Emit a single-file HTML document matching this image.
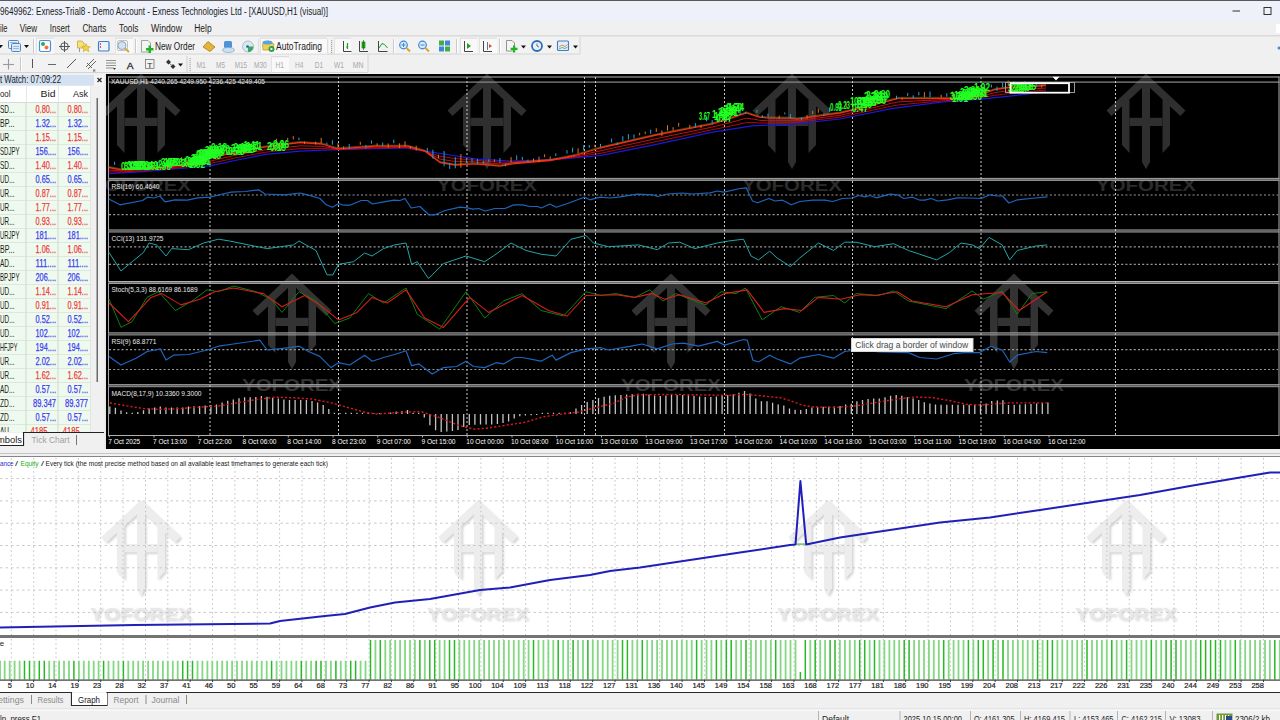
<!DOCTYPE html><html><head><meta charset="utf-8"><title>MT4</title><style>html,body{margin:0;padding:0;width:1280px;height:720px;overflow:hidden;background:#f0f0f0}svg{display:block;font-family:"Liberation Sans",sans-serif}</style></head><body><svg width="1280" height="720" viewBox="0 0 1280 720"><defs><g id="logo"><polygon points="0,0 39.5,37 34.5,42.5 0,10.7 -34.5,42.5 -39.5,37"/><polygon points="-4,5 4,5 4,88.5 0,95.7 -4,88.5"/><polygon points="-24,26 -16.5,26 -16.5,79.5 -24,71.5"/><polygon points="16.5,26 24,26 24,71.5 16.5,79.5"/><rect x="-16.5" y="44.2" width="33" height="8.2"/></g><filter id="blur1"><feGaussianBlur stdDeviation="0.6"/></filter><filter id="blur2"><feGaussianBlur stdDeviation="1.2"/></filter></defs><rect x="0" y="0" width="1280" height="21" fill="#eef1f9" /><rect x="0" y="0" width="1280" height="1" fill="#5a5a5a" /><text x="0" y="14.5" font-size="10" fill="#1b1b1b" textLength="328" lengthAdjust="spacingAndGlyphs" >9649962: Exness-Trial8 - Demo Account - Exness Technologies Ltd - [XAUUSD,H1 (visual)]</text><rect x="1232.5" y="10.5" width="7.5" height="1" fill="#333" /><rect x="1264" y="7.5" width="7" height="7" fill="none" stroke="#333" stroke-width="1"/><rect x="0" y="21" width="1280" height="15" fill="#f0f0f0" /><text x="0" y="31.5" font-size="10" fill="#1b1b1b" textLength="7.5" lengthAdjust="spacingAndGlyphs" >ile</text><text x="19.7" y="31.5" font-size="10" fill="#1b1b1b" textLength="17.4" lengthAdjust="spacingAndGlyphs" >View</text><text x="49.7" y="31.5" font-size="10" fill="#1b1b1b" textLength="20.1" lengthAdjust="spacingAndGlyphs" >Insert</text><text x="82.5" y="31.5" font-size="10" fill="#1b1b1b" textLength="23.9" lengthAdjust="spacingAndGlyphs" >Charts</text><text x="119.1" y="31.5" font-size="10" fill="#1b1b1b" textLength="19.4" lengthAdjust="spacingAndGlyphs" >Tools</text><text x="151" y="31.5" font-size="10" fill="#1b1b1b" textLength="31" lengthAdjust="spacingAndGlyphs" >Window</text><text x="194.2" y="31.5" font-size="10" fill="#1b1b1b" textLength="17.4" lengthAdjust="spacingAndGlyphs" >Help</text><rect x="1276" y="24" width="4" height="9" fill="#fff" /><rect x="0" y="35.2" width="1280" height="1.6" fill="#d6d6d6" /><rect x="0" y="36.5" width="1280" height="37.5" fill="#f0f0f0" /><rect x="0" y="37" width="580" height="17" fill="#f2f2f2" /><rect x="0" y="53.5" width="580" height="1" fill="#d4d4d4" /><rect x="579.5" y="37" width="1" height="17" fill="#d4d4d4" /><rect x="0" y="55" width="368" height="17.5" fill="#f2f2f2" /><rect x="0" y="72" width="368" height="1" fill="#d4d4d4" /><rect x="367.5" y="55" width="1" height="17.5" fill="#d4d4d4" /><polygon points="-2,45 3,45 0.5,48" fill="#111"/><rect x="8.5" y="40.5" width="10" height="8" rx="1" fill="#eaf2fb" stroke="#4f86c6"/><rect x="11.5" y="43.5" width="9" height="8" rx="1" fill="#dce9f7" stroke="#4f86c6"/><rect x="10" y="42" width="7" height="1" fill="#9bb7da" /><rect x="13" y="46" width="6" height="1" fill="#9bb7da" /><rect x="13" y="48" width="6" height="1" fill="#9bb7da" /><polygon points="24,45 29,45 26.5,48" fill="#111"/><rect x="33" y="39" width="1" height="14" fill="#c9c9c9" /><rect x="34" y="39" width="1" height="14" fill="#ffffff" /><rect x="36" y="37.5" width="18" height="16.0" fill="#f9f9f9" /><rect x="36" y="37.5" width="18" height="1.2" fill="#dcdcdc" /><rect x="36" y="37.5" width="1" height="16.0" fill="#e2e2e2" /><rect x="39.5" y="40.5" width="11" height="11" rx="1.5" fill="#fdfdfd" stroke="#4a8fda" stroke-width="1.2"/><circle cx="43" cy="44" r="2" fill="#2fa84f"/><circle cx="46.5" cy="47.5" r="2" fill="#f07040"/><g stroke="#555" fill="none" stroke-width="1"><circle cx="64.5" cy="46.5" r="3.8"/><line x1="64.5" y1="41" x2="64.5" y2="52"/><line x1="59" y1="46.5" x2="70" y2="46.5"/></g><polygon points="77.5,41 82,41 84,43 84,48 77.5,48" fill="#f6e27a" stroke="#c9a73a" stroke-width="0.8"/><polygon points="86,43.5 87.3,46.5 90.3,46.7 88,48.6 88.8,51.6 86,50 83.2,51.6 84,48.6 81.7,46.7 84.7,46.5" fill="#f5d33b" stroke="#c9a12a" stroke-width="0.6"/><rect x="79" y="48" width="1" height="4" fill="#999" /><rect x="98.5" y="41.5" width="10.5" height="9.5" rx="1" fill="#eef3fb" stroke="#3d7cc9" stroke-width="1.2"/><rect x="100" y="43" width="1" height="2" fill="#e05050" /><rect x="100" y="46" width="1" height="2" fill="#e05050" /><rect x="115" y="37.5" width="18" height="16.0" fill="#f9f9f9" /><rect x="115" y="37.5" width="18" height="1.2" fill="#dcdcdc" /><rect x="115" y="37.5" width="1" height="16.0" fill="#e2e2e2" /><circle cx="122" cy="45.5" r="4" fill="#cfe3f5" stroke="#8aa6c2"/><line x1="125" y1="48.5" x2="129" y2="52" stroke="#d9a520" stroke-width="1.8"/><rect x="117.5" y="40.5" width="10" height="10" rx="1.5" fill="none" stroke="#b9b3a6" stroke-width="0.8"/><rect x="135" y="39" width="1" height="14" fill="#c9c9c9" /><rect x="136" y="39" width="1" height="14" fill="#ffffff" /><polygon points="141.5,40.5 148,40.5 150.5,43 150.5,52 141.5,52" fill="#f4f4f4" stroke="#9a9a9a" stroke-width="0.9"/><path d="M148.5,45.5 h2.5 v2.5 h2.5 v2.5 h-2.5 v2.5 h-2.5 v-2.5 h-2.5 v-2.5 h2.5 z" fill="#22b322"/><text x="155" y="49.5" font-size="10" fill="#1b1b1b" textLength="40" lengthAdjust="spacingAndGlyphs" >New Order</text><polygon points="203,47 208,41.5 215,47 210,51.5" fill="#e2b43a" stroke="#a87b12" stroke-width="0.8"/><rect x="224" y="41" width="8" height="7" rx="1.5" fill="#4c93d8"/><ellipse cx="228.5" cy="50" rx="6" ry="2.5" fill="#cfe0f0" stroke="#7fa6cc" stroke-width="0.7"/><circle cx="248" cy="46.5" r="5.5" fill="#d9e8ee" stroke="#9ab4c0" stroke-width="0.8"/><path d="M248,46.5 L248,52 A5.5,5.5 0 0 0 253.5,46.5 Z" fill="#3aa866"/><circle cx="247.5" cy="46.5" r="1.3" fill="#2060a0"/><rect x="258.5" y="39" width="1" height="14" fill="#c9c9c9" /><rect x="259.5" y="39" width="1" height="14" fill="#ffffff" /><rect x="260" y="37.5" width="67" height="16.0" fill="#f9f9f9" /><rect x="260" y="37.5" width="67" height="1.2" fill="#dcdcdc" /><rect x="260" y="37.5" width="1" height="16.0" fill="#e2e2e2" /><polygon points="262.5,44 268,41 274,44 273,50 263,50" fill="#f1cf56" stroke="#b99325" stroke-width="0.7"/><ellipse cx="267.5" cy="42.5" rx="5" ry="2" fill="#5ba3dc"/><circle cx="271.5" cy="49" r="3" fill="#27a33b"/><polygon points="270.5,47.5 273.2,49 270.5,50.5" fill="#fff"/><text x="276" y="49.5" font-size="10" fill="#1b1b1b" textLength="46" lengthAdjust="spacingAndGlyphs" >AutoTrading</text><rect x="327.5" y="39" width="1" height="14" fill="#c9c9c9" /><rect x="328.5" y="39" width="1" height="14" fill="#ffffff" /><rect x="331" y="40" width="1.2" height="1.2" fill="#a8a8a8" /><rect x="331" y="42" width="1.2" height="1.2" fill="#a8a8a8" /><rect x="331" y="44" width="1.2" height="1.2" fill="#a8a8a8" /><rect x="331" y="46" width="1.2" height="1.2" fill="#a8a8a8" /><rect x="331" y="48" width="1.2" height="1.2" fill="#a8a8a8" /><rect x="331" y="50" width="1.2" height="1.2" fill="#a8a8a8" /><rect x="331" y="52" width="1.2" height="1.2" fill="#a8a8a8" /><rect x="334" y="37.5" width="17" height="16.0" fill="#f9f9f9" /><rect x="334" y="37.5" width="17" height="1.2" fill="#dcdcdc" /><rect x="334" y="37.5" width="1" height="16.0" fill="#e2e2e2" /><g fill="none" stroke="#444" stroke-width="1"><path d="M343.5,41 V51.5 H351.5"/></g><path d="M347.5,43 v6 M346,47 h1.5" stroke="#19a619" stroke-width="1.2" fill="none"/><g fill="none" stroke="#444" stroke-width="1"><path d="M359.5,41 V51.5 H368"/></g><rect x="362" y="42" width="3" height="6" fill="#1fc01f" stroke="#0c6b0c" stroke-width="0.6"/><line x1="363.5" y1="40" x2="363.5" y2="50" stroke="#0c6b0c" stroke-width="0.7"/><g fill="none" stroke="#444" stroke-width="1"><path d="M378.5,41 V51.5 H387.5"/></g><path d="M379,48 L382,43.5 L384.5,44.5 L387.5,48" fill="none" stroke="#1c9c1c" stroke-width="1"/><rect x="393" y="39" width="1" height="14" fill="#c9c9c9" /><rect x="394" y="39" width="1" height="14" fill="#ffffff" /><circle cx="403.5" cy="45" r="3.8" fill="#d7eafb" stroke="#3d86d6" stroke-width="1.2"/><path d="M401.5,45 h4 M403.5,43 v4" stroke="#3d86d6" stroke-width="1"/><line x1="406.5" y1="48" x2="410" y2="51.5" stroke="#d9a520" stroke-width="1.8"/><circle cx="422.5" cy="45" r="3.8" fill="#d7eafb" stroke="#3d86d6" stroke-width="1.2"/><path d="M420.5,45 h4" stroke="#3d86d6" stroke-width="1"/><line x1="425.5" y1="48" x2="429" y2="51.5" stroke="#d9a520" stroke-width="1.8"/><rect x="439" y="40.5" width="5" height="5" fill="#3fae49"/><rect x="445" y="40.5" width="5" height="5" fill="#3f86d9"/><rect x="439" y="46.5" width="5" height="5" fill="#3f86d9"/><rect x="445" y="46.5" width="5" height="5" fill="#3fae49"/><rect x="456" y="39" width="1" height="14" fill="#c9c9c9" /><rect x="457" y="39" width="1" height="14" fill="#ffffff" /><rect x="460" y="37.5" width="17" height="16.0" fill="#f9f9f9" /><rect x="460" y="37.5" width="17" height="1.2" fill="#dcdcdc" /><rect x="460" y="37.5" width="1" height="16.0" fill="#e2e2e2" /><rect x="479" y="37.5" width="18" height="16.0" fill="#f9f9f9" /><rect x="479" y="37.5" width="18" height="1.2" fill="#dcdcdc" /><rect x="479" y="37.5" width="1" height="16.0" fill="#e2e2e2" /><g fill="none" stroke="#444" stroke-width="1"><path d="M464.5,41 V51.5 H473"/></g><polygon points="467,43 471,46 467,49" fill="#1fa01f"/><g fill="none" stroke="#444" stroke-width="1"><path d="M483.5,41 V51.5 H492"/></g><line x1="487.5" y1="42" x2="487.5" y2="50" stroke="#4a7ab5"/><polygon points="489,44 492,46 489,48" fill="#d84a2a"/><rect x="499" y="39" width="1" height="14" fill="#c9c9c9" /><rect x="500" y="39" width="1" height="14" fill="#ffffff" /><polygon points="506.5,40.5 512,40.5 514.5,43 514.5,51 506.5,51" fill="#f4f4f4" stroke="#8a8a8a" stroke-width="0.9"/><path d="M513,45.5 h2.2 v2.3 h2.3 v2.3 h-2.3 v2.3 h-2.2 v-2.3 h-2.3 v-2.3 h2.3 z" fill="#22b322"/><polygon points="521,45.5 526,45.5 523.5,48.5" fill="#111"/><circle cx="537" cy="46" r="5" fill="#eaf3fc" stroke="#2c6fc0" stroke-width="1.8"/><path d="M537,43.5 V46 L539,47" stroke="#333" stroke-width="0.7" fill="none"/><polygon points="547,45.5 552,45.5 549.5,48.5" fill="#111"/><rect x="557.5" y="41" width="11" height="9.5" rx="1" fill="#e4eef8" stroke="#3d7cc9" stroke-width="1.1"/><path d="M559,47 L562,45 L565,46.5 L567.5,44.5" stroke="#e06a3a" stroke-width="0.8" fill="none"/><path d="M559,49 L562,47.5 L565,48.5 L567.5,47" stroke="#3aaa5a" stroke-width="0.8" fill="none"/><polygon points="573,45.5 578,45.5 575.5,48.5" fill="#111"/><circle cx="1279" cy="48" r="1.5" fill="#4a86d0"/><g stroke="#9a9a9a" stroke-width="1.1"><line x1="8.5" y1="59" x2="8.5" y2="69.5"/><line x1="3" y1="64.5" x2="14" y2="64.5"/></g><rect x="20" y="57" width="1" height="14" fill="#c9c9c9" /><rect x="21" y="57" width="1" height="14" fill="#ffffff" /><rect x="32" y="59" width="1" height="9" fill="#555" /><rect x="48" y="64" width="8" height="1" fill="#666" /><line x1="67" y1="68" x2="76" y2="59" stroke="#555" stroke-width="1" /><g stroke="#555" stroke-width="0.9"><line x1="86" y1="67" x2="94" y2="59"/><line x1="88" y1="69" x2="96" y2="61"/><line x1="87" y1="63" x2="92" y2="68"/></g><text x="93" y="72" font-size="4" fill="#333">E</text><g stroke="#777" stroke-width="0.8"><line x1="106" y1="60.5" x2="116" y2="60.5"/><line x1="106" y1="63" x2="116" y2="63"/><line x1="106" y1="65.5" x2="116" y2="65.5"/><line x1="106" y1="68" x2="114" y2="68"/></g><polygon points="113,68 116,68 114.5,70" fill="#444"/><text x="126.8" y="68.5" font-size="9.5" fill="#2a2a2a" textLength="6.8" lengthAdjust="spacingAndGlyphs" stroke="#2a2a2a" stroke-width="0.3">A</text><rect x="145.5" y="59.5" width="8.5" height="9" fill="none" stroke="#777" stroke-width="0.8"/><text x="147" y="67.5" font-size="8" fill="#333" textLength="5.5" lengthAdjust="spacingAndGlyphs" >T</text><path d="M168.5,59.5 L171,62 L168.5,64.5 L166,62 Z M173,64 L175.5,66.5 L173,69 L170.5,66.5 Z" fill="#333"/><line x1="169" y1="63" x2="172.5" y2="66" stroke="#555" stroke-width="0.8"/><polygon points="178,63.5 183,63.5 180.5,66.5" fill="#111"/><rect x="186.5" y="56" width="1" height="16" fill="#d0d0d0" /><rect x="189.5" y="58" width="1.2" height="1.2" fill="#b0b0b0" /><rect x="189.5" y="60" width="1.2" height="1.2" fill="#b0b0b0" /><rect x="189.5" y="62" width="1.2" height="1.2" fill="#b0b0b0" /><rect x="189.5" y="64" width="1.2" height="1.2" fill="#b0b0b0" /><rect x="189.5" y="66" width="1.2" height="1.2" fill="#b0b0b0" /><rect x="189.5" y="68" width="1.2" height="1.2" fill="#b0b0b0" /><rect x="189.5" y="70" width="1.2" height="1.2" fill="#b0b0b0" /><rect x="271" y="56" width="18" height="16" fill="#f9f9f9" /><rect x="271" y="56" width="18" height="1.2" fill="#dcdcdc" /><rect x="271" y="56" width="1" height="16" fill="#e2e2e2" /><text x="196.4" y="67.8" font-size="9" fill="#a9a9a9" textLength="9.4" lengthAdjust="spacingAndGlyphs" >M1</text><text x="216" y="67.8" font-size="9" fill="#a9a9a9" textLength="9" lengthAdjust="spacingAndGlyphs" >M5</text><text x="234.7" y="67.8" font-size="9" fill="#a9a9a9" textLength="12.3" lengthAdjust="spacingAndGlyphs" >M15</text><text x="254" y="67.8" font-size="9" fill="#a9a9a9" textLength="12.7" lengthAdjust="spacingAndGlyphs" >M30</text><text x="275.6" y="67.8" font-size="9" fill="#a9a9a9" textLength="8.4" lengthAdjust="spacingAndGlyphs" >H1</text><text x="295" y="67.8" font-size="9" fill="#a9a9a9" textLength="8.4" lengthAdjust="spacingAndGlyphs" >H4</text><text x="314.7" y="67.8" font-size="9" fill="#a9a9a9" textLength="8.3" lengthAdjust="spacingAndGlyphs" >D1</text><text x="334" y="67.8" font-size="9" fill="#a9a9a9" textLength="10" lengthAdjust="spacingAndGlyphs" >W1</text><text x="352.7" y="67.8" font-size="9" fill="#a9a9a9" textLength="10.9" lengthAdjust="spacingAndGlyphs" >MN</text><rect x="0" y="74" width="106" height="375" fill="#f0f0f0" /><rect x="0" y="75" width="94" height="10.5" fill="#d3e2f2" /><rect x="94" y="75" width="11" height="10.5" fill="#f4f4f4" /><text x="0" y="83.3" font-size="10" fill="#1b1b1b" textLength="61" lengthAdjust="spacingAndGlyphs" >t Watch: 07:09:22</text><path d="M97.5,78 L101.5,82 M101.5,78 L97.5,82" stroke="#222" stroke-width="1.2"/><rect x="0" y="86" width="91" height="346" fill="#effaef" /><rect x="0" y="86" width="91" height="16.5" fill="#ffffff" /><rect x="91" y="86" width="14" height="346" fill="#f0f0f0" /><rect x="0" y="102" width="91" height="1" fill="#d9d9d9" /><rect x="26" y="86" width="1" height="16.5" fill="#e6e6e6" /><rect x="58" y="86" width="1" height="16.5" fill="#e6e6e6" /><rect x="90" y="86" width="1" height="16.5" fill="#e6e6e6" /><text x="0" y="96.9" font-size="9.5" fill="#1b1b1b" textLength="10.5" lengthAdjust="spacingAndGlyphs" >ool</text><text x="40.5" y="96.9" font-size="9.5" fill="#1b1b1b" textLength="15" lengthAdjust="spacingAndGlyphs" >Bid</text><text x="73" y="96.9" font-size="9.5" fill="#1b1b1b" textLength="15" lengthAdjust="spacingAndGlyphs" >Ask</text><rect x="0" y="116" width="91" height="1" fill="#dfe6df" /><text x="0" y="113" font-size="10.3" fill="#1b1b1b" textLength="14.5" lengthAdjust="spacingAndGlyphs" >SD...</text><text x="35.5" y="113" font-size="10.3" fill="#f03b3b" textLength="20.5" lengthAdjust="spacingAndGlyphs" stroke="#f03b3b" stroke-width="0.25">0.80...</text><text x="67.5" y="113" font-size="10.3" fill="#f03b3b" textLength="20.5" lengthAdjust="spacingAndGlyphs" stroke="#f03b3b" stroke-width="0.25">0.80...</text><rect x="0" y="130" width="91" height="1" fill="#dfe6df" /><text x="0" y="127" font-size="10.3" fill="#1b1b1b" textLength="14.5" lengthAdjust="spacingAndGlyphs" >BP...</text><text x="35.5" y="127" font-size="10.3" fill="#3b3bf0" textLength="20.5" lengthAdjust="spacingAndGlyphs" stroke="#3b3bf0" stroke-width="0.25">1.32...</text><text x="67.5" y="127" font-size="10.3" fill="#3b3bf0" textLength="20.5" lengthAdjust="spacingAndGlyphs" stroke="#3b3bf0" stroke-width="0.25">1.32...</text><rect x="0" y="144" width="91" height="1" fill="#dfe6df" /><text x="0" y="141" font-size="10.3" fill="#1b1b1b" textLength="14.5" lengthAdjust="spacingAndGlyphs" >UR...</text><text x="35.5" y="141" font-size="10.3" fill="#f03b3b" textLength="20.5" lengthAdjust="spacingAndGlyphs" stroke="#f03b3b" stroke-width="0.25">1.15...</text><text x="67.5" y="141" font-size="10.3" fill="#f03b3b" textLength="20.5" lengthAdjust="spacingAndGlyphs" stroke="#f03b3b" stroke-width="0.25">1.15...</text><rect x="0" y="158" width="91" height="1" fill="#dfe6df" /><text x="0" y="155" font-size="10.3" fill="#1b1b1b" textLength="19.5" lengthAdjust="spacingAndGlyphs" >SDJPY</text><text x="35.5" y="155" font-size="10.3" fill="#3b3bf0" textLength="20.5" lengthAdjust="spacingAndGlyphs" stroke="#3b3bf0" stroke-width="0.25">156....</text><text x="67.5" y="155" font-size="10.3" fill="#3b3bf0" textLength="20.5" lengthAdjust="spacingAndGlyphs" stroke="#3b3bf0" stroke-width="0.25">156....</text><rect x="0" y="172" width="91" height="1" fill="#dfe6df" /><text x="0" y="169" font-size="10.3" fill="#1b1b1b" textLength="14.5" lengthAdjust="spacingAndGlyphs" >SD...</text><text x="35.5" y="169" font-size="10.3" fill="#f03b3b" textLength="20.5" lengthAdjust="spacingAndGlyphs" stroke="#f03b3b" stroke-width="0.25">1.40...</text><text x="67.5" y="169" font-size="10.3" fill="#f03b3b" textLength="20.5" lengthAdjust="spacingAndGlyphs" stroke="#f03b3b" stroke-width="0.25">1.40...</text><rect x="0" y="186" width="91" height="1" fill="#dfe6df" /><text x="0" y="183" font-size="10.3" fill="#1b1b1b" textLength="14.5" lengthAdjust="spacingAndGlyphs" >UD...</text><text x="35.5" y="183" font-size="10.3" fill="#3b3bf0" textLength="20.5" lengthAdjust="spacingAndGlyphs" stroke="#3b3bf0" stroke-width="0.25">0.65...</text><text x="67.5" y="183" font-size="10.3" fill="#3b3bf0" textLength="20.5" lengthAdjust="spacingAndGlyphs" stroke="#3b3bf0" stroke-width="0.25">0.65...</text><rect x="0" y="200" width="91" height="1" fill="#dfe6df" /><text x="0" y="197" font-size="10.3" fill="#1b1b1b" textLength="14.5" lengthAdjust="spacingAndGlyphs" >UR...</text><text x="35.5" y="197" font-size="10.3" fill="#f03b3b" textLength="20.5" lengthAdjust="spacingAndGlyphs" stroke="#f03b3b" stroke-width="0.25">0.87...</text><text x="67.5" y="197" font-size="10.3" fill="#f03b3b" textLength="20.5" lengthAdjust="spacingAndGlyphs" stroke="#f03b3b" stroke-width="0.25">0.87...</text><rect x="0" y="214" width="91" height="1" fill="#dfe6df" /><text x="0" y="211" font-size="10.3" fill="#1b1b1b" textLength="14.5" lengthAdjust="spacingAndGlyphs" >UR...</text><text x="35.5" y="211" font-size="10.3" fill="#f03b3b" textLength="20.5" lengthAdjust="spacingAndGlyphs" stroke="#f03b3b" stroke-width="0.25">1.77...</text><text x="67.5" y="211" font-size="10.3" fill="#f03b3b" textLength="20.5" lengthAdjust="spacingAndGlyphs" stroke="#f03b3b" stroke-width="0.25">1.77...</text><rect x="0" y="228" width="91" height="1" fill="#dfe6df" /><text x="0" y="225" font-size="10.3" fill="#1b1b1b" textLength="14.5" lengthAdjust="spacingAndGlyphs" >UR...</text><text x="35.5" y="225" font-size="10.3" fill="#f03b3b" textLength="20.5" lengthAdjust="spacingAndGlyphs" stroke="#f03b3b" stroke-width="0.25">0.93...</text><text x="67.5" y="225" font-size="10.3" fill="#f03b3b" textLength="20.5" lengthAdjust="spacingAndGlyphs" stroke="#f03b3b" stroke-width="0.25">0.93...</text><rect x="0" y="242" width="91" height="1" fill="#dfe6df" /><text x="0" y="239" font-size="10.3" fill="#1b1b1b" textLength="19.5" lengthAdjust="spacingAndGlyphs" >URJPY</text><text x="35.5" y="239" font-size="10.3" fill="#3b3bf0" textLength="20.5" lengthAdjust="spacingAndGlyphs" stroke="#3b3bf0" stroke-width="0.25">181....</text><text x="67.5" y="239" font-size="10.3" fill="#3b3bf0" textLength="20.5" lengthAdjust="spacingAndGlyphs" stroke="#3b3bf0" stroke-width="0.25">181....</text><rect x="0" y="256" width="91" height="1" fill="#dfe6df" /><text x="0" y="253" font-size="10.3" fill="#1b1b1b" textLength="14.5" lengthAdjust="spacingAndGlyphs" >BP...</text><text x="35.5" y="253" font-size="10.3" fill="#f03b3b" textLength="20.5" lengthAdjust="spacingAndGlyphs" stroke="#f03b3b" stroke-width="0.25">1.06...</text><text x="67.5" y="253" font-size="10.3" fill="#f03b3b" textLength="20.5" lengthAdjust="spacingAndGlyphs" stroke="#f03b3b" stroke-width="0.25">1.06...</text><rect x="0" y="270" width="91" height="1" fill="#dfe6df" /><text x="0" y="267" font-size="10.3" fill="#1b1b1b" textLength="14.5" lengthAdjust="spacingAndGlyphs" >AD...</text><text x="35.5" y="267" font-size="10.3" fill="#3b3bf0" textLength="20.5" lengthAdjust="spacingAndGlyphs" stroke="#3b3bf0" stroke-width="0.25">111....</text><text x="67.5" y="267" font-size="10.3" fill="#3b3bf0" textLength="20.5" lengthAdjust="spacingAndGlyphs" stroke="#3b3bf0" stroke-width="0.25">111....</text><rect x="0" y="284" width="91" height="1" fill="#dfe6df" /><text x="0" y="281" font-size="10.3" fill="#1b1b1b" textLength="19.5" lengthAdjust="spacingAndGlyphs" >BPJPY</text><text x="35.5" y="281" font-size="10.3" fill="#3b3bf0" textLength="20.5" lengthAdjust="spacingAndGlyphs" stroke="#3b3bf0" stroke-width="0.25">206....</text><text x="67.5" y="281" font-size="10.3" fill="#3b3bf0" textLength="20.5" lengthAdjust="spacingAndGlyphs" stroke="#3b3bf0" stroke-width="0.25">206....</text><rect x="0" y="298" width="91" height="1" fill="#dfe6df" /><text x="0" y="295" font-size="10.3" fill="#1b1b1b" textLength="14.5" lengthAdjust="spacingAndGlyphs" >UD...</text><text x="35.5" y="295" font-size="10.3" fill="#f03b3b" textLength="20.5" lengthAdjust="spacingAndGlyphs" stroke="#f03b3b" stroke-width="0.25">1.14...</text><text x="67.5" y="295" font-size="10.3" fill="#f03b3b" textLength="20.5" lengthAdjust="spacingAndGlyphs" stroke="#f03b3b" stroke-width="0.25">1.14...</text><rect x="0" y="312" width="91" height="1" fill="#dfe6df" /><text x="0" y="309" font-size="10.3" fill="#1b1b1b" textLength="14.5" lengthAdjust="spacingAndGlyphs" >UD...</text><text x="35.5" y="309" font-size="10.3" fill="#f03b3b" textLength="20.5" lengthAdjust="spacingAndGlyphs" stroke="#f03b3b" stroke-width="0.25">0.91...</text><text x="67.5" y="309" font-size="10.3" fill="#f03b3b" textLength="20.5" lengthAdjust="spacingAndGlyphs" stroke="#f03b3b" stroke-width="0.25">0.91...</text><rect x="0" y="326" width="91" height="1" fill="#dfe6df" /><text x="0" y="323" font-size="10.3" fill="#1b1b1b" textLength="14.5" lengthAdjust="spacingAndGlyphs" >UD...</text><text x="35.5" y="323" font-size="10.3" fill="#3b3bf0" textLength="20.5" lengthAdjust="spacingAndGlyphs" stroke="#3b3bf0" stroke-width="0.25">0.52...</text><text x="67.5" y="323" font-size="10.3" fill="#3b3bf0" textLength="20.5" lengthAdjust="spacingAndGlyphs" stroke="#3b3bf0" stroke-width="0.25">0.52...</text><rect x="0" y="340" width="91" height="1" fill="#dfe6df" /><text x="0" y="337" font-size="10.3" fill="#1b1b1b" textLength="14.5" lengthAdjust="spacingAndGlyphs" >UD...</text><text x="35.5" y="337" font-size="10.3" fill="#3b3bf0" textLength="20.5" lengthAdjust="spacingAndGlyphs" stroke="#3b3bf0" stroke-width="0.25">102....</text><text x="67.5" y="337" font-size="10.3" fill="#3b3bf0" textLength="20.5" lengthAdjust="spacingAndGlyphs" stroke="#3b3bf0" stroke-width="0.25">102....</text><rect x="0" y="354" width="91" height="1" fill="#dfe6df" /><text x="0" y="351" font-size="10.3" fill="#1b1b1b" textLength="17.5" lengthAdjust="spacingAndGlyphs" >HFJPY</text><text x="35.5" y="351" font-size="10.3" fill="#3b3bf0" textLength="20.5" lengthAdjust="spacingAndGlyphs" stroke="#3b3bf0" stroke-width="0.25">194....</text><text x="67.5" y="351" font-size="10.3" fill="#3b3bf0" textLength="20.5" lengthAdjust="spacingAndGlyphs" stroke="#3b3bf0" stroke-width="0.25">194....</text><rect x="0" y="368" width="91" height="1" fill="#dfe6df" /><text x="0" y="365" font-size="10.3" fill="#1b1b1b" textLength="14.5" lengthAdjust="spacingAndGlyphs" >UR...</text><text x="35.5" y="365" font-size="10.3" fill="#3b3bf0" textLength="20.5" lengthAdjust="spacingAndGlyphs" stroke="#3b3bf0" stroke-width="0.25">2.02...</text><text x="67.5" y="365" font-size="10.3" fill="#3b3bf0" textLength="20.5" lengthAdjust="spacingAndGlyphs" stroke="#3b3bf0" stroke-width="0.25">2.02...</text><rect x="0" y="382" width="91" height="1" fill="#dfe6df" /><text x="0" y="379" font-size="10.3" fill="#1b1b1b" textLength="14.5" lengthAdjust="spacingAndGlyphs" >UR...</text><text x="35.5" y="379" font-size="10.3" fill="#f03b3b" textLength="20.5" lengthAdjust="spacingAndGlyphs" stroke="#f03b3b" stroke-width="0.25">1.62...</text><text x="67.5" y="379" font-size="10.3" fill="#f03b3b" textLength="20.5" lengthAdjust="spacingAndGlyphs" stroke="#f03b3b" stroke-width="0.25">1.62...</text><rect x="0" y="396" width="91" height="1" fill="#dfe6df" /><text x="0" y="393" font-size="10.3" fill="#1b1b1b" textLength="14.5" lengthAdjust="spacingAndGlyphs" >AD...</text><text x="35.5" y="393" font-size="10.3" fill="#3b3bf0" textLength="20.5" lengthAdjust="spacingAndGlyphs" stroke="#3b3bf0" stroke-width="0.25">0.57...</text><text x="67.5" y="393" font-size="10.3" fill="#3b3bf0" textLength="20.5" lengthAdjust="spacingAndGlyphs" stroke="#3b3bf0" stroke-width="0.25">0.57...</text><rect x="0" y="410" width="91" height="1" fill="#dfe6df" /><text x="0" y="407" font-size="10.3" fill="#1b1b1b" textLength="14.5" lengthAdjust="spacingAndGlyphs" >ZD...</text><text x="33" y="407" font-size="10.3" fill="#3b3bf0" textLength="23" lengthAdjust="spacingAndGlyphs" stroke="#3b3bf0" stroke-width="0.25">89.347</text><text x="65" y="407" font-size="10.3" fill="#3b3bf0" textLength="23" lengthAdjust="spacingAndGlyphs" stroke="#3b3bf0" stroke-width="0.25">89.377</text><rect x="0" y="424" width="91" height="1" fill="#dfe6df" /><text x="0" y="421" font-size="10.3" fill="#1b1b1b" textLength="14.5" lengthAdjust="spacingAndGlyphs" >ZD...</text><text x="35.5" y="421" font-size="10.3" fill="#3b3bf0" textLength="20.5" lengthAdjust="spacingAndGlyphs" stroke="#3b3bf0" stroke-width="0.25">0.57...</text><text x="67.5" y="421" font-size="10.3" fill="#3b3bf0" textLength="20.5" lengthAdjust="spacingAndGlyphs" stroke="#3b3bf0" stroke-width="0.25">0.57...</text><rect x="0" y="438" width="91" height="1" fill="#dfe6df" /><text x="0" y="435" font-size="10.3" fill="#1b1b1b" textLength="9" lengthAdjust="spacingAndGlyphs" >AU</text><text x="30.6" y="435" font-size="10.3" fill="#f03b3b" textLength="17" lengthAdjust="spacingAndGlyphs" stroke="#f03b3b" stroke-width="0.25">4185</text><text x="62.7" y="435" font-size="10.3" fill="#f03b3b" textLength="17" lengthAdjust="spacingAndGlyphs" stroke="#f03b3b" stroke-width="0.25">4185</text><rect x="25.5" y="103" width="1" height="329" fill="#cfd6cf" /><rect x="57.5" y="103" width="1" height="329" fill="#cfd6cf" /><rect x="90" y="103" width="1" height="329" fill="#dfe6df" /><rect x="96.5" y="98" width="1.5" height="284" fill="#6a6a6a" /><rect x="0" y="432" width="105" height="17" fill="#f0f0f0" /><path d="M0,445.5 H23.5 V432.5 H104" fill="none" stroke="#222" stroke-width="1.2"/><rect x="0" y="433" width="23" height="12" fill="#ffffff" /><text x="-3" y="442.5" font-size="9.5" fill="#1b1b1b" textLength="25" lengthAdjust="spacingAndGlyphs" >mbols</text><text x="31.5" y="442.5" font-size="9.5" fill="#a0a0a0" textLength="38" lengthAdjust="spacingAndGlyphs" >Tick Chart</text><rect x="76" y="435" width="1" height="10" fill="#777" /><rect x="104.5" y="74" width="1.5" height="375" fill="#e6e6e6" /><rect x="106" y="74" width="1174" height="375" fill="#000000" /><clipPath id="chartclip"><rect x="106" y="74" width="1174" height="375"/></clipPath><g clip-path="url(#chartclip)"><use href="#logo" x="141" y="73.6" fill="#2f2f2f" /><text x="91" y="190.9" font-size="17.3" font-weight="bold" fill="#2c2c2c" textLength="100" lengthAdjust="spacingAndGlyphs" >YOFOREX</text><use href="#logo" x="487" y="73.6" fill="#2f2f2f" /><text x="437" y="190.9" font-size="17.3" font-weight="bold" fill="#2c2c2c" textLength="100" lengthAdjust="spacingAndGlyphs" >YOFOREX</text><use href="#logo" x="792" y="73.6" fill="#2f2f2f" /><text x="742" y="190.9" font-size="17.3" font-weight="bold" fill="#2c2c2c" textLength="100" lengthAdjust="spacingAndGlyphs" >YOFOREX</text><use href="#logo" x="1146" y="73.6" fill="#2f2f2f" /><text x="1096" y="190.9" font-size="17.3" font-weight="bold" fill="#2c2c2c" textLength="100" lengthAdjust="spacingAndGlyphs" >YOFOREX</text><use href="#logo" x="292" y="273.6" fill="#333333" /><text x="242" y="390.90000000000003" font-size="17.3" font-weight="bold" fill="#333333" textLength="100" lengthAdjust="spacingAndGlyphs" >YOFOREX</text><use href="#logo" x="671" y="273.6" fill="#333333" /><text x="621" y="390.90000000000003" font-size="17.3" font-weight="bold" fill="#333333" textLength="100" lengthAdjust="spacingAndGlyphs" >YOFOREX</text><use href="#logo" x="1014" y="273.6" fill="#333333" /><text x="964" y="390.90000000000003" font-size="17.3" font-weight="bold" fill="#333333" textLength="100" lengthAdjust="spacingAndGlyphs" >YOFOREX</text></g><rect x="108" y="76.5" width="1171.5" height="1" fill="#b4b4b4" /><rect x="108" y="81.5" width="1171.5" height="1.2" fill="#8a8a8a" /><rect x="108" y="76.5" width="1" height="359" fill="#a8a8a8" /><rect x="1278.5" y="76.5" width="1" height="359" fill="#b4b4b4" /><rect x="108" y="177.9" width="1171.5" height="1" fill="#b0b0b0" /><rect x="108" y="178.9" width="1171.5" height="1" fill="#6e6e6e" /><rect x="108" y="179.9" width="1171.5" height="1" fill="#9c9c9c" /><rect x="108" y="229.5" width="1171.5" height="1" fill="#b0b0b0" /><rect x="108" y="230.5" width="1171.5" height="1" fill="#6e6e6e" /><rect x="108" y="231.5" width="1171.5" height="1" fill="#9c9c9c" /><rect x="108" y="281.0" width="1171.5" height="1" fill="#b0b0b0" /><rect x="108" y="282.0" width="1171.5" height="1" fill="#6e6e6e" /><rect x="108" y="283.0" width="1171.5" height="1" fill="#9c9c9c" /><rect x="108" y="332.4" width="1171.5" height="1" fill="#b0b0b0" /><rect x="108" y="333.4" width="1171.5" height="1" fill="#6e6e6e" /><rect x="108" y="334.4" width="1171.5" height="1" fill="#9c9c9c" /><rect x="108" y="384.2" width="1171.5" height="1" fill="#b0b0b0" /><rect x="108" y="385.2" width="1171.5" height="1" fill="#6e6e6e" /><rect x="108" y="386.2" width="1171.5" height="1" fill="#9c9c9c" /><rect x="108" y="435" width="1171.5" height="1" fill="#b0b0b0" /><line x1="210" y1="77" x2="210" y2="435" stroke="#c8c8c8" stroke-width="1" stroke-dasharray="2,2"/><line x1="338.5" y1="77" x2="338.5" y2="435" stroke="#c8c8c8" stroke-width="1" stroke-dasharray="2,2"/><line x1="467" y1="77" x2="467" y2="435" stroke="#c8c8c8" stroke-width="1" stroke-dasharray="2,2"/><line x1="584.5" y1="77" x2="584.5" y2="435" stroke="#c8c8c8" stroke-width="1" stroke-dasharray="2,2"/><line x1="595.5" y1="77" x2="595.5" y2="435" stroke="#c8c8c8" stroke-width="1" stroke-dasharray="2,2"/><line x1="724.5" y1="77" x2="724.5" y2="435" stroke="#c8c8c8" stroke-width="1" stroke-dasharray="2,2"/><line x1="852.5" y1="77" x2="852.5" y2="435" stroke="#c8c8c8" stroke-width="1" stroke-dasharray="2,2"/><line x1="981" y1="77" x2="981" y2="435" stroke="#c8c8c8" stroke-width="1" stroke-dasharray="2,2"/><line x1="1115.5" y1="77" x2="1115.5" y2="435" stroke="#c8c8c8" stroke-width="1" stroke-dasharray="2,2"/><line x1="109" y1="195" x2="1278" y2="195" stroke="#9a9a9a" stroke-width="1.2" stroke-dasharray="2,2.2"/><line x1="109" y1="214.7" x2="1278" y2="214.7" stroke="#9a9a9a" stroke-width="1.2" stroke-dasharray="2,2.2"/><line x1="109" y1="246.8" x2="1278" y2="246.8" stroke="#9a9a9a" stroke-width="1.2" stroke-dasharray="2,2.2"/><line x1="109" y1="264.4" x2="1278" y2="264.4" stroke="#9a9a9a" stroke-width="1.2" stroke-dasharray="2,2.2"/><line x1="109" y1="349.6" x2="1278" y2="349.6" stroke="#9a9a9a" stroke-width="1.2" stroke-dasharray="2,2.2"/><line x1="109" y1="369.5" x2="1278" y2="369.5" stroke="#9a9a9a" stroke-width="1.2" stroke-dasharray="2,2.2"/><rect x="108.75" y="435" width="1" height="2.5" fill="#b0b0b0" /><text x="108.25" y="443.8" font-size="8" fill="#ffffff" textLength="32" lengthAdjust="spacingAndGlyphs" >7 Oct 2025</text><rect x="153.5" y="435" width="1" height="2.5" fill="#b0b0b0" /><text x="153.0" y="443.8" font-size="8" fill="#ffffff" textLength="34" lengthAdjust="spacingAndGlyphs" >7 Oct 13:00</text><rect x="198.25" y="435" width="1" height="2.5" fill="#b0b0b0" /><text x="197.75" y="443.8" font-size="8" fill="#ffffff" textLength="34" lengthAdjust="spacingAndGlyphs" >7 Oct 22:00</text><rect x="243.0" y="435" width="1" height="2.5" fill="#b0b0b0" /><text x="242.5" y="443.8" font-size="8" fill="#ffffff" textLength="34" lengthAdjust="spacingAndGlyphs" >8 Oct 06:00</text><rect x="287.75" y="435" width="1" height="2.5" fill="#b0b0b0" /><text x="287.25" y="443.8" font-size="8" fill="#ffffff" textLength="34" lengthAdjust="spacingAndGlyphs" >8 Oct 14:00</text><rect x="332.5" y="435" width="1" height="2.5" fill="#b0b0b0" /><text x="332.0" y="443.8" font-size="8" fill="#ffffff" textLength="34" lengthAdjust="spacingAndGlyphs" >8 Oct 23:00</text><rect x="377.25" y="435" width="1" height="2.5" fill="#b0b0b0" /><text x="376.75" y="443.8" font-size="8" fill="#ffffff" textLength="34" lengthAdjust="spacingAndGlyphs" >9 Oct 07:00</text><rect x="422.0" y="435" width="1" height="2.5" fill="#b0b0b0" /><text x="421.5" y="443.8" font-size="8" fill="#ffffff" textLength="34" lengthAdjust="spacingAndGlyphs" >9 Oct 15:00</text><rect x="466.75" y="435" width="1" height="2.5" fill="#b0b0b0" /><text x="466.25" y="443.8" font-size="8" fill="#ffffff" textLength="37.5" lengthAdjust="spacingAndGlyphs" >10 Oct 00:00</text><rect x="511.5" y="435" width="1" height="2.5" fill="#b0b0b0" /><text x="511.0" y="443.8" font-size="8" fill="#ffffff" textLength="37.5" lengthAdjust="spacingAndGlyphs" >10 Oct 08:00</text><rect x="556.25" y="435" width="1" height="2.5" fill="#b0b0b0" /><text x="555.75" y="443.8" font-size="8" fill="#ffffff" textLength="37.5" lengthAdjust="spacingAndGlyphs" >10 Oct 16:00</text><rect x="601.0" y="435" width="1" height="2.5" fill="#b0b0b0" /><text x="600.5" y="443.8" font-size="8" fill="#ffffff" textLength="37.5" lengthAdjust="spacingAndGlyphs" >13 Oct 01:00</text><rect x="645.75" y="435" width="1" height="2.5" fill="#b0b0b0" /><text x="645.25" y="443.8" font-size="8" fill="#ffffff" textLength="37.5" lengthAdjust="spacingAndGlyphs" >13 Oct 09:00</text><rect x="690.5" y="435" width="1" height="2.5" fill="#b0b0b0" /><text x="690.0" y="443.8" font-size="8" fill="#ffffff" textLength="37.5" lengthAdjust="spacingAndGlyphs" >13 Oct 17:00</text><rect x="735.25" y="435" width="1" height="2.5" fill="#b0b0b0" /><text x="734.75" y="443.8" font-size="8" fill="#ffffff" textLength="37.5" lengthAdjust="spacingAndGlyphs" >14 Oct 02:00</text><rect x="780.0" y="435" width="1" height="2.5" fill="#b0b0b0" /><text x="779.5" y="443.8" font-size="8" fill="#ffffff" textLength="37.5" lengthAdjust="spacingAndGlyphs" >14 Oct 10:00</text><rect x="824.75" y="435" width="1" height="2.5" fill="#b0b0b0" /><text x="824.25" y="443.8" font-size="8" fill="#ffffff" textLength="37.5" lengthAdjust="spacingAndGlyphs" >14 Oct 18:00</text><rect x="869.5" y="435" width="1" height="2.5" fill="#b0b0b0" /><text x="869.0" y="443.8" font-size="8" fill="#ffffff" textLength="37.5" lengthAdjust="spacingAndGlyphs" >15 Oct 03:00</text><rect x="914.25" y="435" width="1" height="2.5" fill="#b0b0b0" /><text x="913.75" y="443.8" font-size="8" fill="#ffffff" textLength="37.5" lengthAdjust="spacingAndGlyphs" >15 Oct 11:00</text><rect x="959.0" y="435" width="1" height="2.5" fill="#b0b0b0" /><text x="958.5" y="443.8" font-size="8" fill="#ffffff" textLength="37.5" lengthAdjust="spacingAndGlyphs" >15 Oct 19:00</text><rect x="1003.75" y="435" width="1" height="2.5" fill="#b0b0b0" /><text x="1003.25" y="443.8" font-size="8" fill="#ffffff" textLength="37.5" lengthAdjust="spacingAndGlyphs" >16 Oct 04:00</text><rect x="1048.5" y="435" width="1" height="2.5" fill="#b0b0b0" /><text x="1048.0" y="443.8" font-size="8" fill="#ffffff" textLength="37.5" lengthAdjust="spacingAndGlyphs" >16 Oct 12:00</text><text x="111" y="84.2" font-size="8" fill="#e8e8e8" textLength="154" lengthAdjust="spacingAndGlyphs" >XAUUSD,H1  4240.265 4249.950 4236.425 4249.405</text><text x="111.5" y="189" font-size="8" fill="#e8e8e8" textLength="48" lengthAdjust="spacingAndGlyphs" >RSI(16) 66.4640</text><text x="111.5" y="240.5" font-size="8" fill="#e8e8e8" textLength="52" lengthAdjust="spacingAndGlyphs" >CCI(13) 131.9725</text><text x="111.5" y="292" font-size="8" fill="#e8e8e8" textLength="86" lengthAdjust="spacingAndGlyphs" >Stoch(5,3,3) 88.6169 86.1689</text><text x="111.5" y="344" font-size="8" fill="#e8e8e8" textLength="45" lengthAdjust="spacingAndGlyphs" >RSI(9) 68.8771</text><text x="111.5" y="395.5" font-size="8" fill="#e8e8e8" textLength="90" lengthAdjust="spacingAndGlyphs" >MACD(8,17,9) 10.3360 9.3000</text><g clip-path="url(#chartclip)"><polyline points="108.8,199.0 120.0,204.8 142.5,200.5 147.5,197.2 153.8,198.0 160.0,196.0 165.0,201.8 175.0,199.8 187.5,200.2 197.5,197.8 210.0,197.2 222.5,194.0 231.2,192.2 245.0,191.5 258.8,189.8 265.0,194.0 285.0,194.8 300.0,193.0 307.5,194.8 320.0,198.5 326.2,204.8 332.5,207.2 338.8,203.5 343.8,205.2 350.0,205.2 361.2,200.5 367.5,200.5 372.5,204.0 382.5,202.2 393.8,200.2 400.0,200.5 405.0,198.5 411.2,208.0 420.0,206.5 428.8,214.8 435.0,214.8 445.0,210.5 460.0,207.2 467.5,207.8 472.5,209.2 478.8,208.5 485.0,211.0 495.0,208.5 505.0,208.5 513.8,204.8 522.5,204.8 530.0,206.5 537.5,206.5 541.2,208.0 550.0,204.0 556.2,207.2 567.5,203.5 577.5,199.8 584.5,197.2 590.0,199.8 600.0,197.2 610.0,198.0 620.0,196.8 637.5,194.2 652.5,194.8 657.5,196.5 667.5,194.0 682.5,193.0 692.5,194.0 710.0,192.8 717.5,191.0 723.8,192.2 740.0,188.5 746.2,187.8 752.5,201.0 757.5,202.8 768.8,198.5 775.0,201.0 782.5,200.2 791.2,204.8 800.0,201.5 812.5,200.2 825.0,200.2 832.5,201.5 842.5,198.5 852.5,198.0 858.8,195.5 865.0,196.8 870.0,195.5 876.2,197.8 890.0,194.2 897.5,194.8 903.8,198.5 912.5,197.2 920.0,200.2 925.0,200.2 931.2,198.5 937.5,201.0 947.5,199.8 957.5,197.8 970.0,198.0 981.2,198.5 990.0,194.8 997.5,196.0 1002.5,196.0 1008.8,203.0 1017.5,199.8 1035.0,198.0 1047.5,196.8" fill="none" stroke="#1d66bf" stroke-width="1.2" stroke-linejoin="round" /><polyline points="109.0,252.4 121.0,271.0 132.2,261.7 143.5,252.4 149.0,243.0 156.6,244.9 166.0,256.0 171.6,248.6 188.5,249.7 203.5,243.0 218.5,239.2 229.7,241.0 248.5,244.9 267.2,248.6 293.5,244.9 299.0,241.0 316.0,250.5 327.0,274.9 332.8,274.9 338.5,264.4 353.5,261.7 364.7,253.0 372.0,256.0 383.5,248.6 394.7,244.9 406.0,243.0 411.6,264.4 417.2,261.7 428.5,278.6 443.5,263.6 466.0,256.0 484.7,261.7 496.0,254.2 511.0,243.0 526.0,250.5 541.0,254.2 556.0,256.0 571.0,239.2 586.0,235.5 593.5,243.0 608.5,246.7 638.5,244.9 657.2,249.7 668.5,243.0 679.7,242.2 694.7,248.6 717.2,243.0 728.5,241.0 743.5,239.2 751.0,256.0 758.5,259.9 769.7,251.2 777.2,258.0 790.4,266.6 799.7,258.0 818.5,243.0 833.5,250.5 844.7,242.2 856.0,242.2 874.7,246.7 893.5,243.7 908.5,250.5 919.7,254.2 936.6,259.9 949.7,252.4 961.0,243.0 972.2,244.9 979.7,248.6 989.0,237.4 1002.2,244.9 1009.7,259.9 1017.2,250.5 1036.0,246.0 1047.2,244.9" fill="none" stroke="#22a6a6" stroke-width="1.0" stroke-linejoin="round" /><polyline points="109.0,299.0 121.0,327.4 132.0,321.7 147.0,297.4 158.5,291.7 175.4,310.5 192.0,301.0 207.0,289.9 218.5,291.7 233.5,286.0 256.0,291.7 271.0,299.2 282.0,312.4 299.0,291.7 316.0,301.0 334.7,323.6 349.7,318.0 368.5,293.6 383.5,303.0 406.0,288.0 417.2,314.2 439.7,329.2 466.0,291.7 484.7,318.0 503.5,301.0 522.2,293.6 541.0,310.5 563.5,316.0 586.0,291.7 601.0,295.5 616.0,293.6 634.7,297.4 649.7,289.9 662.9,301.0 676.0,293.6 694.7,301.0 706.0,304.9 721.0,291.7 736.0,293.6 745.4,288.0 762.2,319.9 781.0,306.7 799.7,312.4 814.7,297.4 833.5,295.5 844.7,303.0 856.0,293.6 878.5,295.5 893.5,291.0 908.5,301.0 946.0,308.6 972.2,291.0 983.5,299.2 1002.2,291.0 1017.2,314.2 1032.2,293.6 1047.2,291.7" fill="none" stroke="#0c800c" stroke-width="1.0" stroke-linejoin="round" /><polyline points="109.0,303.0 128.5,321.7 151.0,297.4 162.0,293.6 181.0,304.9 199.7,299.2 214.7,291.7 233.5,288.0 263.5,293.6 282.0,306.7 304.7,295.5 319.7,304.9 338.5,319.9 357.0,312.4 372.0,297.4 387.2,303.0 406.0,289.9 424.7,318.0 443.5,327.4 469.7,297.4 488.5,312.4 522.2,295.5 548.5,310.5 567.2,316.0 586.0,295.5 616.0,294.7 634.7,297.4 651.6,293.6 664.7,299.2 679.7,294.7 706.0,303.0 724.7,293.6 747.2,289.9 764.1,312.4 784.7,308.6 801.6,310.5 818.5,297.4 841.0,299.2 859.7,294.7 874.7,295.5 897.2,291.7 912.2,301.0 946.0,306.7 972.2,294.7 1002.2,292.5 1019.1,310.5 1047.2,291.7" fill="none" stroke="#d81c1c" stroke-width="1.1" stroke-linejoin="round" /><polyline points="109.0,356.4 121.0,365.0 136.0,358.2 147.2,351.5 160.4,348.9 166.0,360.1 173.5,355.2 188.5,354.5 207.2,350.0 218.5,346.2 233.5,344.0 259.7,340.2 267.2,350.0 278.5,348.9 289.7,347.7 299.1,346.2 308.5,351.5 319.7,356.4 331.0,367.6 338.5,362.7 349.7,365.0 364.7,355.2 372.2,361.2 383.5,357.5 394.7,354.5 406.0,350.7 411.6,365.7 419.0,363.9 432.2,374.0 443.5,367.6 456.6,366.5 466.0,361.2 473.5,366.5 484.7,367.6 496.0,362.7 503.5,363.9 514.7,357.5 522.2,357.5 541.0,361.2 552.2,355.2 556.0,360.1 571.0,352.6 586.0,348.9 601.0,347.7 608.5,350.0 631.0,346.2 642.2,344.0 657.2,348.9 672.2,344.0 683.5,343.2 698.5,346.2 717.2,341.4 724.7,345.1 743.5,339.5 747.2,340.2 752.9,360.1 758.5,362.0 769.7,355.2 777.2,359.0 790.4,363.9 799.7,358.2 818.5,354.5 833.5,358.2 844.7,351.5 856.0,350.0 880.0,352.0 908.5,352.6 919.7,357.5 936.6,359.0 953.5,353.7 964.7,352.6 979.7,352.6 991.0,346.2 1002.2,350.0 1009.7,362.0 1017.2,355.2 1036.0,351.5 1047.2,352.6" fill="none" stroke="#1d66bf" stroke-width="1.2" stroke-linejoin="round" /><path d="M109.8,414 V406.6 M115.4,414 V407.7 M121.0,414 V410.4 M126.6,414 V412.2 M132.2,414 V412.7 M137.8,414 V412.1 M143.5,414 V410.2 M149.1,414 V408.5 M154.7,414 V407.5 M160.3,414 V406.6 M165.9,414 V407.5 M171.5,414 V407.5 M177.2,414 V407.5 M182.8,414 V407.4 M188.4,414 V406.6 M194.0,414 V406.3 M199.6,414 V405.9 M205.2,414 V405.5 M210.9,414 V405.1 M216.5,414 V404.5 M222.1,414 V402.6 M227.7,414 V400.7 M233.3,414 V399.5 M239.0,414 V398.3 M244.6,414 V397.2 M250.2,414 V397.2 M255.8,414 V397.1 M261.4,414 V396.0 M267.0,414 V396.7 M272.7,414 V397.9 M278.3,414 V398.6 M283.9,414 V399.6 M289.5,414 V400.0 M295.1,414 V400.0 M300.7,414 V400.0 M306.4,414 V400.1 M312.0,414 V401.0 M317.6,414 V402.4 M323.2,414 V405.0 M328.8,414 V408.9 M334.4,414 V412.7 M340.1,414 V413.1 M345.7,414 V412.8 M351.3,414 V412.8 M356.9,414 V412.8 M362.5,414 V412.8 M368.2,414 V412.8 M373.8,414 V413.2 M379.4,414 V413.1 M385.0,414 V413.0 M390.6,414 V412.6 M396.2,414 V411.5 M401.9,414 V411.1 M407.5,414 V410.1 M413.1,414 V412.8 M418.7,414 V412.8 M424.3,414 V417.5 M429.9,414 V425.3 M435.6,414 V430.3 M441.2,414 V431.9 M446.8,414 V431.5 M452.4,414 V431.0 M458.0,414 V429.9 M463.7,414 V427.0 M469.3,414 V425.1 M474.9,414 V424.7 M480.5,414 V424.4 M486.1,414 V424.4 M491.7,414 V424.4 M497.4,414 V424.1 M503.0,414 V423.1 M508.6,414 V421.4 M514.2,414 V418.6 M519.8,414 V416.3 M525.4,414 V415.4 M531.1,414 V415.3 M536.7,414 V415.1 M542.3,414 V412.8 M547.9,414 V412.8 M553.5,414 V412.8 M559.1,414 V412.8 M564.8,414 V412.8 M570.4,414 V411.9 M576.0,414 V408.5 M581.6,414 V405.0 M587.2,414 V402.1 M592.9,414 V400.1 M598.5,414 V398.0 M604.1,414 V396.7 M609.7,414 V395.7 M615.3,414 V395.2 M620.9,414 V394.9 M626.6,414 V394.6 M632.2,414 V394.2 M637.8,414 V393.7 M643.4,414 V393.7 M649.0,414 V394.4 M654.6,414 V395.4 M660.3,414 V396.1 M665.9,414 V395.5 M671.5,414 V394.9 M677.1,414 V395.0 M682.7,414 V395.1 M688.4,414 V395.3 M694.0,414 V395.7 M699.6,414 V396.4 M705.2,414 V397.0 M710.8,414 V396.9 M716.4,414 V396.4 M722.1,414 V395.8 M727.7,414 V395.0 M733.3,414 V394.2 M738.9,414 V392.7 M744.5,414 V390.9 M750.1,414 V393.6 M755.8,414 V398.5 M761.4,414 V401.3 M767.0,414 V401.3 M772.6,414 V402.8 M778.2,414 V404.6 M783.8,414 V405.6 M789.5,414 V408.5 M795.1,414 V409.8 M800.7,414 V410.1 M806.3,414 V408.9 M811.9,414 V407.5 M817.6,414 V407.1 M823.2,414 V406.8 M828.8,414 V406.6 M834.4,414 V406.5 M840.0,414 V406.0 M845.6,414 V404.6 M851.3,414 V403.7 M856.9,414 V401.2 M862.5,414 V400.1 M868.1,414 V398.9 M873.7,414 V398.6 M879.3,414 V398.6 M885.0,414 V397.3 M890.6,414 V395.8 M896.2,414 V394.9 M901.8,414 V395.8 M907.4,414 V396.9 M913.1,414 V398.4 M918.7,414 V400.1 M924.3,414 V402.3 M929.9,414 V403.5 M935.5,414 V404.5 M941.1,414 V404.7 M946.8,414 V404.7 M952.4,414 V404.7 M958.0,414 V404.7 M963.6,414 V404.7 M969.2,414 V404.7 M974.8,414 V404.7 M980.5,414 V403.7 M986.1,414 V403.6 M991.7,414 V401.1 M997.3,414 V400.6 M1002.9,414 V400.3 M1008.5,414 V405.1 M1014.2,414 V404.8 M1019.8,414 V404.6 M1025.4,414 V404.3 M1031.0,414 V404.0 M1036.6,414 V403.5 M1042.3,414 V403.0 M1047.9,414 V402.5" stroke="#c4c4c4" stroke-width="1.3" fill="none"/><polyline points="109.8,402.8 124.8,405.6 143.5,408.5 162.3,409.4 181.0,408.5 199.8,407.1 218.6,406.0 237.3,402.8 256.1,399.6 274.9,397.2 293.6,397.8 312.4,399.1 331.1,402.8 347.9,407.5 364.8,412.2 376.0,414.1 402.3,412.2 421.0,411.6 439.8,417.8 458.6,425.3 473.6,429.1 486.7,428.2 505.5,425.3 524.2,422.5 543.0,416.9 561.8,414.1 577.5,412.2 596.3,407.5 615.0,402.8 626.3,397.2 637.6,394.8 671.3,394.4 727.6,395.3 746.4,394.4 780.0,397.7 791.0,400.8 801.9,405.1 812.8,406.9 834.7,407.5 856.6,405.8 878.4,402.1 900.3,398.6 915.6,397.0 933.1,397.7 950.6,400.8 966.0,404.3 981.3,405.1 998.8,403.6 1009.7,402.9 1048.0,402.9" fill="none" stroke="#d81818" stroke-width="1.4" stroke-linejoin="round" stroke-dasharray="2.2,2"/><polyline points="108.8,173.7 143.5,171.6 181.0,168.5 211.0,165.6 237.3,160.0 265.5,154.4 300.0,151.2 338.6,149.7 405.0,148.0 425.0,151.2 450.0,155.0 475.0,158.8 512.5,161.2 537.5,160.0 562.5,158.8 600.0,155.7 656.3,144.4 712.6,132.2 753.8,125.6 787.6,124.7 840.0,119.0 891.5,108.6 943.0,101.8 981.0,99.2 1011.8,95.8 1034.0,93.2 1046.0,92.0" fill="none" stroke="#1a1ad8" stroke-width="1.2" stroke-linejoin="round" /><polyline points="108.8,171.8 121.0,172.0 143.5,170.7 171.7,168.5 181.0,167.5 190.4,166.3 211.0,163.3 237.3,157.5 265.5,152.2 300.0,148.6 321.8,148.5 337.5,149.4 338.6,149.4 375.0,148.0 405.0,147.5 407.5,147.8 425.0,151.2 440.0,156.2 450.0,157.8 455.0,158.5 475.0,160.2 500.0,162.2 512.5,162.0 537.5,160.5 550.0,159.7 562.5,158.5 575.0,157.1 600.0,153.4 656.3,141.6 712.6,129.7 731.3,125.9 746.3,122.6 753.8,122.5 759.5,123.0 768.9,123.1 787.6,122.7 797.0,122.3 815.7,120.0 840.0,117.2 865.8,111.7 891.5,106.1 898.4,104.9 943.0,100.8 951.7,100.3 977.5,98.3 981.0,97.8 994.6,95.3 1005.0,94.0 1011.8,93.3 1034.0,91.1 1046.0,90.0" fill="none" stroke="#c00a0a" stroke-width="0.9" stroke-linejoin="round" /><polyline points="108.8,169.9 121.0,171.0 143.5,169.7 171.7,167.6 181.0,166.3 190.4,165.0 211.0,160.9 237.3,154.8 265.5,149.8 300.0,145.8 321.8,146.4 337.5,149.1 338.6,149.1 375.0,147.2 405.0,146.9 407.5,147.1 425.0,151.2 440.0,159.1 450.0,160.7 455.0,161.5 475.0,161.9 500.0,164.0 512.5,162.8 537.5,161.0 550.0,160.1 562.5,158.3 575.0,156.3 600.0,150.9 656.3,138.6 712.6,127.0 731.3,122.3 746.3,118.2 753.8,119.2 759.5,120.3 768.9,120.8 787.6,120.6 797.0,120.8 815.7,118.3 840.0,115.3 865.8,109.5 891.5,103.3 898.4,101.9 943.0,99.6 951.7,99.4 977.5,97.2 981.0,96.3 994.6,92.7 1005.0,91.2 1011.8,90.7 1034.0,88.9 1046.0,88.0" fill="none" stroke="#dc1010" stroke-width="0.9" stroke-linejoin="round" /><polyline points="108.8,167.5 121.0,169.8 143.5,168.5 171.7,166.6 190.4,163.4 211.0,158.1 237.3,151.6 265.5,146.9 300.0,142.5 321.8,144.0 337.5,148.8 375.0,146.2 407.5,146.2 425.0,151.2 440.0,162.5 455.0,165.0 475.0,163.8 500.0,166.2 512.5,163.8 550.0,160.5 575.0,155.5 600.0,148.0 656.3,135.0 712.6,123.8 731.3,118.1 746.3,112.9 759.5,117.2 768.9,118.1 787.6,118.1 797.0,119.1 815.7,116.3 840.0,113.0 865.8,106.9 898.4,98.3 951.7,98.3 977.5,95.8 994.6,89.7 1005.0,88.0 1046.0,85.5" fill="none" stroke="#ff2418" stroke-width="1.3" stroke-linejoin="round" /><polyline points="108.8,166.5 121.0,168.8 143.5,167.5 171.7,165.6 190.4,162.4 211.0,157.1 237.3,150.6 265.5,145.9 300.0,141.5 321.8,143.0 337.5,147.8 375.0,145.2 407.5,145.2 425.0,150.2 440.0,161.5 455.0,164.0 475.0,162.8 500.0,165.2 512.5,162.8 550.0,159.5 575.0,154.5 600.0,147.0 656.3,134.0 712.6,122.8 731.3,117.1 746.3,111.9 759.5,116.2 768.9,117.1 787.6,117.1 797.0,118.1 815.7,115.3 840.0,112.0 865.8,105.9 898.4,97.3 951.7,97.3 977.5,94.8 994.6,88.7 1005.0,87.0 1046.0,84.5" fill="none" stroke="#90c820" stroke-width="0.5" stroke-linejoin="round" opacity="0.7"/><path d="M125.8,161.4 v4.9 M142.5,164.0 v2.4 M148.1,164.0 v4.0 M170.4,161.8 v4.0 M181.6,157.2 v4.6 M187.2,160.2 v4.3 M215.1,148.9 v4.3 M220.7,149.6 v2.4 M226.3,149.8 v2.9 M231.9,148.7 v3.6 M243.0,147.3 v5.1 M248.6,144.3 v2.8 M259.8,145.6 v4.0 M276.6,138.7 v3.4 M282.1,139.8 v2.2 M287.7,137.9 v2.2 M293.3,136.2 v3.3 M304.5,141.5 v2.4 M315.6,141.6 v2.9 M321.2,137.8 v5.3 M338.0,143.2 v4.7 M343.6,146.4 v2.8 M360.3,141.8 v3.0 M377.1,143.3 v2.7 M388.2,143.4 v4.3 M399.4,143.3 v4.8 M405.0,141.3 v5.3 M410.6,146.0 v2.5 M416.2,145.7 v4.9 M438.5,154.7 v3.5 M460.9,154.0 v13.7 M494.4,159.3 v2.8 M511.1,157.1 v5.3 M533.5,158.5 v3.2 M539.0,156.7 v5.4 M544.6,154.3 v2.9 M550.2,156.5 v2.5 M578.1,148.3 v5.0 M594.9,144.7 v2.7 M639.6,132.8 v2.5 M645.2,131.5 v2.6 M656.3,128.3 v3.6 M661.9,130.4 v5.4 M667.5,125.2 v5.4 M673.1,127.2 v3.3 M678.7,122.8 v3.8 M689.8,125.0 v2.8 M701.0,124.9 v3.1 M717.8,117.4 v3.8 M734.5,110.4 v3.3 M779.2,115.7 v2.9 M807.1,114.9 v3.6 M812.7,111.1 v2.9 M818.3,108.8 v4.0 M846.2,102.6 v4.9 M868.6,100.6 v2.2 M874.1,96.9 v5.3 M902.1,97.7 v2.2 M924.4,92.1 v5.2 M941.2,94.8 v2.9 M952.3,91.4 v3.2 M969.1,94.8 v3.6 M985.8,88.5 v5.2 M1008.2,80.5 v4.7 M1041.7,84.7 v2.9" stroke="#e8701a" stroke-width="1" fill="none"/><path d="M114.6,161.7 v3.3 M131.3,163.3 v5.3 M136.9,167.9 v2.2 M153.7,162.0 v2.2 M159.3,161.8 v3.5 M164.9,164.8 v3.0 M192.8,159.9 v3.1 M198.4,158.8 v3.6 M203.9,152.0 v4.3 M209.5,153.9 v5.5 M237.5,144.2 v5.0 M254.2,141.9 v2.9 M271.0,142.7 v4.7 M298.9,137.6 v2.5 M326.8,142.6 v2.1 M332.4,140.3 v4.4 M349.2,144.1 v4.8 M365.9,144.9 v3.6 M371.5,140.5 v3.3 M382.7,142.5 v3.7 M393.8,139.6 v3.7 M427.3,147.9 v4.3 M432.9,149.7 v8.9 M444.1,151.0 v15.2 M449.7,162.9 v6.0 M455.3,157.1 v11.2 M466.4,157.8 v5.2 M472.0,158.2 v4.4 M477.6,158.9 v5.3 M483.2,161.0 v2.9 M488.8,159.4 v2.5 M499.9,158.0 v5.1 M505.5,163.9 v2.5 M516.7,155.4 v4.9 M522.3,156.9 v3.2 M527.9,159.7 v2.1 M555.8,153.3 v2.9 M567.0,150.1 v3.5 M572.6,147.7 v4.8 M583.7,145.2 v5.2 M589.3,145.0 v2.8 M600.5,143.9 v3.0 M611.6,138.5 v3.9 M617.2,142.6 v2.4 M622.8,136.2 v4.9 M628.4,134.1 v5.4 M634.0,134.4 v4.2 M650.7,129.6 v4.3 M695.4,123.2 v4.3 M706.6,117.0 v4.3 M712.2,120.1 v4.2 M723.4,115.1 v4.9 M740.1,110.6 v4.2 M745.7,111.9 v2.0 M756.9,109.9 v2.9 M762.4,115.2 v2.7 M768.0,113.6 v3.3 M784.8,112.4 v2.0 M790.4,114.0 v4.4 M801.5,117.6 v2.7 M823.9,113.6 v2.5 M829.5,107.4 v4.5 M835.1,107.6 v2.1 M840.6,106.6 v3.1 M851.8,109.3 v2.4 M857.4,104.1 v3.0 M863.0,101.7 v4.1 M879.7,98.8 v2.7 M885.3,96.7 v4.8 M896.5,95.7 v3.6 M907.7,92.9 v3.2 M913.2,95.3 v2.9 M918.8,91.9 v3.4 M930.0,91.5 v5.5 M946.8,93.3 v3.4 M957.9,94.3 v2.4 M963.5,92.0 v2.8 M974.7,90.2 v2.1 M991.4,84.6 v2.9 M997.0,86.6 v4.4 M1002.6,82.5 v4.7 M1013.8,81.2 v3.1 M1024.9,81.1 v4.0 M1030.5,82.2 v2.0 M1036.1,83.1 v4.3" stroke="#22a0e0" stroke-width="1" fill="none"/><text x="121.0" y="169.9" font-size="11" font-weight="bold" fill="#22ff22" textLength="16" lengthAdjust="spacingAndGlyphs">0.34</text><text x="124.0" y="170.3" font-size="11" font-weight="bold" fill="#22ff22" textLength="16" lengthAdjust="spacingAndGlyphs">3.20</text><text x="127.0" y="169.4" font-size="11" font-weight="bold" fill="#22ff22" textLength="16" lengthAdjust="spacingAndGlyphs">3.57</text><text x="130.0" y="169.1" font-size="11" font-weight="bold" fill="#22ff22" textLength="16" lengthAdjust="spacingAndGlyphs">0.99</text><text x="133.0" y="169.2" font-size="11" font-weight="bold" fill="#22ff22" textLength="16" lengthAdjust="spacingAndGlyphs">3.56</text><text x="136.0" y="170.1" font-size="11" font-weight="bold" fill="#22ff22" textLength="16" lengthAdjust="spacingAndGlyphs">1.10</text><text x="139.0" y="170.2" font-size="11" font-weight="bold" fill="#22ff22" textLength="16" lengthAdjust="spacingAndGlyphs">0.36</text><text x="142.0" y="169.1" font-size="11" font-weight="bold" fill="#22ff22" textLength="16" lengthAdjust="spacingAndGlyphs">1.49</text><text x="155.0" y="170.1" font-size="11" font-weight="bold" fill="#22ff22" textLength="16" lengthAdjust="spacingAndGlyphs">1.39</text><text x="158.0" y="168.2" font-size="11" font-weight="bold" fill="#22ff22" textLength="16" lengthAdjust="spacingAndGlyphs">2.47</text><text x="161.0" y="166.2" font-size="11" font-weight="bold" fill="#22ff22" textLength="16" lengthAdjust="spacingAndGlyphs">3.88</text><text x="164.0" y="165.8" font-size="11" font-weight="bold" fill="#22ff22" textLength="16" lengthAdjust="spacingAndGlyphs">1.72</text><text x="167.0" y="166.1" font-size="11" font-weight="bold" fill="#22ff22" textLength="16" lengthAdjust="spacingAndGlyphs">0.86</text><text x="181.0" y="166.9" font-size="11" font-weight="bold" fill="#22ff22" textLength="16" lengthAdjust="spacingAndGlyphs">3.16</text><text x="183.0" y="166.2" font-size="11" font-weight="bold" fill="#22ff22" textLength="16" lengthAdjust="spacingAndGlyphs">1.63</text><text x="185.0" y="164.2" font-size="11" font-weight="bold" fill="#22ff22" textLength="16" lengthAdjust="spacingAndGlyphs">0.33</text><text x="187.0" y="165.3" font-size="11" font-weight="bold" fill="#22ff22" textLength="16" lengthAdjust="spacingAndGlyphs">2.24</text><text x="189.0" y="167.8" font-size="11" font-weight="bold" fill="#22ff22" textLength="16" lengthAdjust="spacingAndGlyphs">1.52</text><text x="191.0" y="162.0" font-size="11" font-weight="bold" fill="#22ff22" textLength="16" lengthAdjust="spacingAndGlyphs">3.14</text><text x="193.0" y="161.7" font-size="11" font-weight="bold" fill="#22ff22" textLength="16" lengthAdjust="spacingAndGlyphs">3.57</text><text x="195.0" y="164.7" font-size="11" font-weight="bold" fill="#22ff22" textLength="16" lengthAdjust="spacingAndGlyphs">3.31</text><text x="197.0" y="158.4" font-size="11" font-weight="bold" fill="#22ff22" textLength="16" lengthAdjust="spacingAndGlyphs">0.45</text><text x="199.0" y="157.2" font-size="11" font-weight="bold" fill="#22ff22" textLength="16" lengthAdjust="spacingAndGlyphs">3.25</text><text x="201.0" y="159.0" font-size="11" font-weight="bold" fill="#22ff22" textLength="16" lengthAdjust="spacingAndGlyphs">1.58</text><text x="203.0" y="156.8" font-size="11" font-weight="bold" fill="#22ff22" textLength="16" lengthAdjust="spacingAndGlyphs">2.65</text><text x="205.0" y="154.1" font-size="11" font-weight="bold" fill="#22ff22" textLength="16" lengthAdjust="spacingAndGlyphs">3.35</text><text x="207.0" y="154.8" font-size="11" font-weight="bold" fill="#22ff22" textLength="16" lengthAdjust="spacingAndGlyphs">3.34</text><text x="209.0" y="153.5" font-size="11" font-weight="bold" fill="#22ff22" textLength="16" lengthAdjust="spacingAndGlyphs">3.13</text><text x="190.0" y="164.8" font-size="11" font-weight="bold" fill="#22ff22" textLength="16" lengthAdjust="spacingAndGlyphs">1.90</text><text x="193.0" y="164.0" font-size="11" font-weight="bold" fill="#22ff22" textLength="16" lengthAdjust="spacingAndGlyphs">0.58</text><text x="196.0" y="158.0" font-size="11" font-weight="bold" fill="#22ff22" textLength="16" lengthAdjust="spacingAndGlyphs">0.17</text><text x="199.0" y="157.7" font-size="11" font-weight="bold" fill="#22ff22" textLength="16" lengthAdjust="spacingAndGlyphs">0.87</text><text x="202.0" y="156.5" font-size="11" font-weight="bold" fill="#22ff22" textLength="16" lengthAdjust="spacingAndGlyphs">2.52</text><text x="205.0" y="158.6" font-size="11" font-weight="bold" fill="#22ff22" textLength="16" lengthAdjust="spacingAndGlyphs">0.43</text><text x="208.0" y="155.7" font-size="11" font-weight="bold" fill="#22ff22" textLength="16" lengthAdjust="spacingAndGlyphs">2.45</text><text x="211.0" y="151.4" font-size="11" font-weight="bold" fill="#22ff22" textLength="16" lengthAdjust="spacingAndGlyphs">0.13</text><text x="214.0" y="153.0" font-size="11" font-weight="bold" fill="#22ff22" textLength="16" lengthAdjust="spacingAndGlyphs">0.70</text><text x="226.0" y="154.9" font-size="11" font-weight="bold" fill="#22ff22" textLength="16" lengthAdjust="spacingAndGlyphs">3.59</text><text x="228.5" y="154.7" font-size="11" font-weight="bold" fill="#22ff22" textLength="16" lengthAdjust="spacingAndGlyphs">3.73</text><text x="231.0" y="151.5" font-size="11" font-weight="bold" fill="#22ff22" textLength="16" lengthAdjust="spacingAndGlyphs">3.33</text><text x="233.5" y="150.5" font-size="11" font-weight="bold" fill="#22ff22" textLength="16" lengthAdjust="spacingAndGlyphs">2.98</text><text x="236.0" y="153.1" font-size="11" font-weight="bold" fill="#22ff22" textLength="16" lengthAdjust="spacingAndGlyphs">1.51</text><text x="238.5" y="152.9" font-size="11" font-weight="bold" fill="#22ff22" textLength="16" lengthAdjust="spacingAndGlyphs">3.56</text><text x="241.0" y="152.1" font-size="11" font-weight="bold" fill="#22ff22" textLength="16" lengthAdjust="spacingAndGlyphs">0.75</text><text x="243.5" y="149.3" font-size="11" font-weight="bold" fill="#22ff22" textLength="16" lengthAdjust="spacingAndGlyphs">1.41</text><text x="246.0" y="149.6" font-size="11" font-weight="bold" fill="#22ff22" textLength="16" lengthAdjust="spacingAndGlyphs">0.71</text><text x="267.0" y="150.2" font-size="11" font-weight="bold" fill="#22ff22" textLength="16" lengthAdjust="spacingAndGlyphs">2.30</text><text x="270.0" y="151.0" font-size="11" font-weight="bold" fill="#22ff22" textLength="16" lengthAdjust="spacingAndGlyphs">0.19</text><text x="273.0" y="148.4" font-size="11" font-weight="bold" fill="#22ff22" textLength="16" lengthAdjust="spacingAndGlyphs">0.36</text><text x="699.0" y="119.8" font-size="11" font-weight="bold" fill="#22ff22" textLength="11" lengthAdjust="spacingAndGlyphs">3.67</text><text x="712.0" y="118.1" font-size="11" font-weight="bold" fill="#22ff22" textLength="16" lengthAdjust="spacingAndGlyphs">1.63</text><text x="714.0" y="119.6" font-size="11" font-weight="bold" fill="#22ff22" textLength="16" lengthAdjust="spacingAndGlyphs">1.78</text><text x="716.0" y="122.1" font-size="11" font-weight="bold" fill="#22ff22" textLength="16" lengthAdjust="spacingAndGlyphs">0.47</text><text x="718.0" y="116.1" font-size="11" font-weight="bold" fill="#22ff22" textLength="16" lengthAdjust="spacingAndGlyphs">2.57</text><text x="720.0" y="114.8" font-size="11" font-weight="bold" fill="#22ff22" textLength="16" lengthAdjust="spacingAndGlyphs">2.35</text><text x="722.0" y="115.5" font-size="11" font-weight="bold" fill="#22ff22" textLength="16" lengthAdjust="spacingAndGlyphs">1.41</text><text x="724.0" y="112.6" font-size="11" font-weight="bold" fill="#22ff22" textLength="16" lengthAdjust="spacingAndGlyphs">2.84</text><text x="726.0" y="111.2" font-size="11" font-weight="bold" fill="#22ff22" textLength="16" lengthAdjust="spacingAndGlyphs">0.60</text><text x="728.0" y="110.8" font-size="11" font-weight="bold" fill="#22ff22" textLength="16" lengthAdjust="spacingAndGlyphs">1.74</text><text x="830.0" y="110.6" font-size="11" font-weight="bold" fill="#22ff22" textLength="12" lengthAdjust="spacingAndGlyphs">0.93</text><text x="838.0" y="109.1" font-size="11" font-weight="bold" fill="#22ff22" textLength="12" lengthAdjust="spacingAndGlyphs">0.23</text><text x="850.0" y="105.0" font-size="11" font-weight="bold" fill="#22ff22" textLength="16" lengthAdjust="spacingAndGlyphs">1.67</text><text x="852.0" y="111.6" font-size="11" font-weight="bold" fill="#22ff22" textLength="16" lengthAdjust="spacingAndGlyphs">0.47</text><text x="854.0" y="105.4" font-size="11" font-weight="bold" fill="#22ff22" textLength="16" lengthAdjust="spacingAndGlyphs">0.34</text><text x="856.0" y="107.6" font-size="11" font-weight="bold" fill="#22ff22" textLength="16" lengthAdjust="spacingAndGlyphs">1.19</text><text x="858.0" y="105.0" font-size="11" font-weight="bold" fill="#22ff22" textLength="16" lengthAdjust="spacingAndGlyphs">1.67</text><text x="860.0" y="106.1" font-size="11" font-weight="bold" fill="#22ff22" textLength="16" lengthAdjust="spacingAndGlyphs">0.23</text><text x="862.0" y="105.6" font-size="11" font-weight="bold" fill="#22ff22" textLength="16" lengthAdjust="spacingAndGlyphs">2.37</text><text x="864.0" y="100.0" font-size="11" font-weight="bold" fill="#22ff22" textLength="16" lengthAdjust="spacingAndGlyphs">2.28</text><text x="866.0" y="99.4" font-size="11" font-weight="bold" fill="#22ff22" textLength="16" lengthAdjust="spacingAndGlyphs">2.14</text><text x="868.0" y="103.0" font-size="11" font-weight="bold" fill="#22ff22" textLength="16" lengthAdjust="spacingAndGlyphs">1.11</text><text x="870.0" y="104.1" font-size="11" font-weight="bold" fill="#22ff22" textLength="16" lengthAdjust="spacingAndGlyphs">3.96</text><text x="872.0" y="99.7" font-size="11" font-weight="bold" fill="#22ff22" textLength="16" lengthAdjust="spacingAndGlyphs">2.19</text><text x="874.0" y="97.6" font-size="11" font-weight="bold" fill="#22ff22" textLength="16" lengthAdjust="spacingAndGlyphs">3.80</text><text x="950.0" y="99.9" font-size="11" font-weight="bold" fill="#22ff22" textLength="16" lengthAdjust="spacingAndGlyphs">3.22</text><text x="952.0" y="101.9" font-size="11" font-weight="bold" fill="#22ff22" textLength="16" lengthAdjust="spacingAndGlyphs">1.91</text><text x="954.0" y="99.3" font-size="11" font-weight="bold" fill="#22ff22" textLength="16" lengthAdjust="spacingAndGlyphs">1.60</text><text x="956.0" y="100.1" font-size="11" font-weight="bold" fill="#22ff22" textLength="16" lengthAdjust="spacingAndGlyphs">3.46</text><text x="958.0" y="99.4" font-size="11" font-weight="bold" fill="#22ff22" textLength="16" lengthAdjust="spacingAndGlyphs">3.16</text><text x="960.0" y="96.1" font-size="11" font-weight="bold" fill="#22ff22" textLength="16" lengthAdjust="spacingAndGlyphs">2.63</text><text x="962.0" y="96.5" font-size="11" font-weight="bold" fill="#22ff22" textLength="16" lengthAdjust="spacingAndGlyphs">2.92</text><text x="964.0" y="94.2" font-size="11" font-weight="bold" fill="#22ff22" textLength="16" lengthAdjust="spacingAndGlyphs">3.36</text><text x="966.0" y="99.7" font-size="11" font-weight="bold" fill="#22ff22" textLength="16" lengthAdjust="spacingAndGlyphs">3.30</text><text x="968.0" y="95.1" font-size="11" font-weight="bold" fill="#22ff22" textLength="16" lengthAdjust="spacingAndGlyphs">0.61</text><text x="970.0" y="95.8" font-size="11" font-weight="bold" fill="#22ff22" textLength="16" lengthAdjust="spacingAndGlyphs">2.68</text><text x="972.0" y="96.9" font-size="11" font-weight="bold" fill="#22ff22" textLength="16" lengthAdjust="spacingAndGlyphs">1.11</text><text x="974.0" y="90.7" font-size="11" font-weight="bold" fill="#22ff22" textLength="16" lengthAdjust="spacingAndGlyphs">1.92</text><text x="1008.0" y="92.1" font-size="11" font-weight="bold" fill="#22ff22" textLength="16" lengthAdjust="spacingAndGlyphs">3.21</text><text x="1011.0" y="91.5" font-size="11" font-weight="bold" fill="#22ff22" textLength="16" lengthAdjust="spacingAndGlyphs">2.74</text><text x="1014.0" y="90.6" font-size="11" font-weight="bold" fill="#22ff22" textLength="16" lengthAdjust="spacingAndGlyphs">2.46</text><text x="1017.0" y="90.4" font-size="11" font-weight="bold" fill="#22ff22" textLength="16" lengthAdjust="spacingAndGlyphs">1.18</text><text x="1020.0" y="90.2" font-size="11" font-weight="bold" fill="#22ff22" textLength="16" lengthAdjust="spacingAndGlyphs">3.35</text><rect x="1005.5" y="82.5" width="69" height="10" fill="none" stroke="#9a9a9a" stroke-width="1"/><rect x="1010.5" y="83.2" width="58.5" height="9.5" fill="none" stroke="#ffffff" stroke-width="1.8"/><polygon points="1052.5,76.7 1059.5,76.7 1056,80.5" fill="#ffffff"/></g><rect x="851.5" y="338.5" width="121.5" height="13" fill="#fbfbfb" stroke="#d8d8d8" stroke-width="1"/><text x="855.2" y="347.8" font-size="9" fill="#4a4a4a" textLength="113" lengthAdjust="spacingAndGlyphs" >Click  drag a border of window</text><rect x="0" y="449" width="1280" height="8" fill="#f0f0f0" /><rect x="0" y="453" width="1280" height="1" fill="#c4c4c4" /><rect x="0" y="456" width="1280" height="1.3" fill="#858585" /><rect x="0" y="457" width="1280" height="178" fill="#ffffff" /><use href="#logo" x="142.6" y="501.6" fill="#d2d2d2" filter="url(#blur2)"/><use href="#logo" x="141" y="500" fill="#ededed" /><text x="91" y="620.5" font-size="17.3" font-weight="bold" fill="#d0d0d0" textLength="102" lengthAdjust="spacingAndGlyphs" filter="url(#blur2)">YOFOREX</text><text x="90" y="619.5" font-size="17.3" font-weight="bold" fill="#e8e8e8" textLength="102" lengthAdjust="spacingAndGlyphs">YOFOREX</text><use href="#logo" x="479.6" y="501.6" fill="#d2d2d2" filter="url(#blur2)"/><use href="#logo" x="478" y="500" fill="#ededed" /><text x="428" y="620.5" font-size="17.3" font-weight="bold" fill="#d0d0d0" textLength="102" lengthAdjust="spacingAndGlyphs" filter="url(#blur2)">YOFOREX</text><text x="427" y="619.5" font-size="17.3" font-weight="bold" fill="#e8e8e8" textLength="102" lengthAdjust="spacingAndGlyphs">YOFOREX</text><use href="#logo" x="829.6" y="501.6" fill="#d2d2d2" filter="url(#blur2)"/><use href="#logo" x="828" y="500" fill="#ededed" /><text x="778" y="620.5" font-size="17.3" font-weight="bold" fill="#d0d0d0" textLength="102" lengthAdjust="spacingAndGlyphs" filter="url(#blur2)">YOFOREX</text><text x="777" y="619.5" font-size="17.3" font-weight="bold" fill="#e8e8e8" textLength="102" lengthAdjust="spacingAndGlyphs">YOFOREX</text><use href="#logo" x="1127.6" y="501.6" fill="#d2d2d2" filter="url(#blur2)"/><use href="#logo" x="1126" y="500" fill="#ededed" /><text x="1076" y="620.5" font-size="17.3" font-weight="bold" fill="#d0d0d0" textLength="102" lengthAdjust="spacingAndGlyphs" filter="url(#blur2)">YOFOREX</text><text x="1075" y="619.5" font-size="17.3" font-weight="bold" fill="#e8e8e8" textLength="102" lengthAdjust="spacingAndGlyphs">YOFOREX</text><path d="M11.3,458 V635 M33.7,458 V635 M56.0,458 V635 M78.4,458 V635 M100.7,458 V635 M123.1,458 V635 M145.5,458 V635 M167.8,458 V635 M190.2,458 V635 M212.5,458 V635 M234.9,458 V635 M257.3,458 V635 M279.6,458 V635 M302.0,458 V635 M324.3,458 V635 M346.7,458 V635 M369.1,458 V635 M391.4,458 V635 M413.8,458 V635 M436.1,458 V635 M458.5,458 V635 M480.9,458 V635 M503.2,458 V635 M525.6,458 V635 M547.9,458 V635 M570.3,458 V635 M592.7,458 V635 M615.0,458 V635 M637.4,458 V635 M659.7,458 V635 M682.1,458 V635 M704.5,458 V635 M726.8,458 V635 M749.2,458 V635 M771.5,458 V635 M793.9,458 V635 M816.3,458 V635 M838.6,458 V635 M861.0,458 V635 M883.3,458 V635 M905.7,458 V635 M928.1,458 V635 M950.4,458 V635 M972.8,458 V635 M995.1,458 V635 M1017.5,458 V635 M1039.9,458 V635 M1062.2,458 V635 M1084.6,458 V635 M1106.9,458 V635 M1129.3,458 V635 M1151.7,458 V635 M1174.0,458 V635 M1196.4,458 V635 M1218.7,458 V635 M1241.1,458 V635 M1263.5,458 V635" stroke="#c0c0c0" stroke-width="1" stroke-dasharray="1.5,2.9" fill="none"/><path d="M0,478.6 H1280 M0,500.9 H1280 M0,523.2 H1280 M0,545.5 H1280 M0,567.8 H1280 M0,590.1 H1280 M0,612.4 H1280" stroke="#c8c8c8" stroke-width="1" stroke-dasharray="2.5,3" fill="none"/><text x="-9" y="465.5" font-size="8" fill="#2b2bd0" textLength="22.5" lengthAdjust="spacingAndGlyphs" >Balance</text><text x="15" y="465.5" font-size="8" fill="#1b1b1b" textLength="3" lengthAdjust="spacingAndGlyphs" >/</text><text x="20.6" y="465.5" font-size="8" fill="#20b020" textLength="18" lengthAdjust="spacingAndGlyphs" >Equity</text><text x="41" y="465.5" font-size="8" fill="#1b1b1b" textLength="3" lengthAdjust="spacingAndGlyphs" >/</text><text x="45.6" y="465.5" font-size="8" fill="#1b1b1b" textLength="282.4" lengthAdjust="spacingAndGlyphs" >Every tick (the most precise method based on all available least timeframes to generate each tick)</text><rect x="795.5" y="543.5" width="10.5" height="1.2" fill="#30c030" /><polyline points="0.0,627.5 135.0,625.0 270.0,623.5 280.0,621.0 325.0,616.0 345.0,614.0 370.0,607.5 395.0,602.5 430.0,599.0 480.0,590.0 510.0,587.5 550.0,580.0 590.0,575.0 610.0,571.0 640.0,567.5 690.0,560.0 740.0,552.5 790.0,545.0 795.5,544.4 800.4,481.1 806.2,544.4 840.0,537.5 890.0,530.0 940.0,522.5 990.0,517.5 1040.0,510.0 1090.0,502.5 1140.0,495.0 1190.0,486.0 1240.0,477.5 1270.0,472.5 1280.0,472.5" fill="none" stroke="#2020b8" stroke-width="2" stroke-linejoin="round" /><rect x="0" y="635" width="1280" height="3" fill="#747474" /><rect x="0" y="638" width="1280" height="54" fill="#ffffff" /><path d="M11.3,639 V680 M33.7,639 V680 M56.0,639 V680 M78.4,639 V680 M100.7,639 V680 M123.1,639 V680 M145.5,639 V680 M167.8,639 V680 M190.2,639 V680 M212.5,639 V680 M234.9,639 V680 M257.3,639 V680 M279.6,639 V680 M302.0,639 V680 M324.3,639 V680 M346.7,639 V680 M369.1,639 V680 M391.4,639 V680 M413.8,639 V680 M436.1,639 V680 M458.5,639 V680 M480.9,639 V680 M503.2,639 V680 M525.6,639 V680 M547.9,639 V680 M570.3,639 V680 M592.7,639 V680 M615.0,639 V680 M637.4,639 V680 M659.7,639 V680 M682.1,639 V680 M704.5,639 V680 M726.8,639 V680 M749.2,639 V680 M771.5,639 V680 M793.9,639 V680 M816.3,639 V680 M838.6,639 V680 M861.0,639 V680 M883.3,639 V680 M905.7,639 V680 M928.1,639 V680 M950.4,639 V680 M972.8,639 V680 M995.1,639 V680 M1017.5,639 V680 M1039.9,639 V680 M1062.2,639 V680 M1084.6,639 V680 M1106.9,639 V680 M1129.3,639 V680 M1151.7,639 V680 M1174.0,639 V680 M1196.4,639 V680 M1218.7,639 V680 M1241.1,639 V680 M1263.5,639 V680" stroke="#c0c0c0" stroke-width="1" stroke-dasharray="1.5,2.9" fill="none"/><text x="-22" y="646" font-size="8" fill="#1b1b1b" textLength="26" lengthAdjust="spacingAndGlyphs" >Volume</text><path d="M4.7,660.7 V679.5 M9.7,660.7 V679.5 M14.6,660.7 V679.5 M19.6,660.7 V679.5 M34.4,660.7 V679.5 M49.2,660.7 V679.5 M54.2,660.7 V679.5 M59.1,660.7 V679.5 M64.0,660.7 V679.5 M69.0,660.7 V679.5 M78.9,660.7 V679.5 M83.8,660.7 V679.5 M88.8,660.7 V679.5 M93.7,660.7 V679.5 M98.6,660.7 V679.5 M108.5,660.7 V679.5 M113.5,660.7 V679.5 M118.4,660.7 V679.5 M128.3,660.7 V679.5 M133.2,660.7 V679.5 M138.2,660.7 V679.5 M143.1,660.7 V679.5 M148.1,660.7 V679.5 M153.0,660.7 V679.5 M157.9,660.7 V679.5 M162.9,660.7 V679.5 M167.8,660.7 V679.5 M172.8,660.7 V679.5 M177.7,660.7 V679.5 M197.5,660.7 V679.5 M202.4,660.7 V679.5 M207.4,660.7 V679.5 M212.3,660.7 V679.5 M217.2,660.7 V679.5 M222.2,660.7 V679.5 M227.1,660.7 V679.5 M232.1,660.7 V679.5 M237.0,660.7 V679.5 M242.0,660.7 V679.5 M246.9,660.7 V679.5 M251.8,660.7 V679.5 M256.8,660.7 V679.5 M261.7,660.7 V679.5 M266.7,660.7 V679.5 M276.6,660.7 V679.5 M281.5,660.7 V679.5 M286.4,660.7 V679.5 M291.4,660.7 V679.5 M296.3,660.7 V679.5 M306.2,660.7 V679.5 M311.1,660.7 V679.5 M326.0,660.7 V679.5 M330.9,660.7 V679.5 M340.8,660.7 V679.5 M345.7,660.7 V679.5 M360.6,660.7 V679.5 M365.5,660.7 V679.5 M375.4,640 V679.5 M385.3,640 V679.5 M390.2,640 V679.5 M395.2,640 V679.5 M400.1,640 V679.5 M405.0,640 V679.5 M410.0,640 V679.5 M414.9,640 V679.5 M424.8,640 V679.5 M439.6,640 V679.5 M444.6,640 V679.5 M459.4,640 V679.5 M464.3,640 V679.5 M469.3,640 V679.5 M474.2,640 V679.5 M479.2,640 V679.5 M484.1,640 V679.5 M489.1,640 V679.5 M494.0,640 V679.5 M498.9,640 V679.5 M503.9,640 V679.5 M508.8,640 V679.5 M513.8,640 V679.5 M518.7,640 V679.5 M523.7,640 V679.5 M528.6,640 V679.5 M538.5,640 V679.5 M543.4,640 V679.5 M548.4,640 V679.5 M553.3,640 V679.5 M563.2,640 V679.5 M568.1,640 V679.5 M578.0,640 V679.5 M583.0,640 V679.5 M592.8,640 V679.5 M597.8,640 V679.5 M602.7,640 V679.5 M607.7,640 V679.5 M612.6,640 V679.5 M617.6,640 V679.5 M632.4,640 V679.5 M637.3,640 V679.5 M647.2,640 V679.5 M652.1,640 V679.5 M657.1,640 V679.5 M662.0,640 V679.5 M667.0,640 V679.5 M671.9,640 V679.5 M676.9,640 V679.5 M681.8,640 V679.5 M686.7,640 V679.5 M691.7,640 V679.5 M701.6,640 V679.5 M706.5,640 V679.5 M711.4,640 V679.5 M721.3,640 V679.5 M736.2,640 V679.5 M741.1,640 V679.5 M751.0,640 V679.5 M755.9,640 V679.5 M760.9,640 V679.5 M765.8,640 V679.5 M770.8,640 V679.5 M780.6,640 V679.5 M785.6,640 V679.5 M790.5,640 V679.5 M795.5,640 V679.5 M810.3,640 V679.5 M820.2,640 V679.5 M825.1,640 V679.5 M839.9,640 V679.5 M844.9,640 V679.5 M849.8,640 V679.5 M854.8,640 V679.5 M869.6,640 V679.5 M879.5,640 V679.5 M884.4,640 V679.5 M889.4,640 V679.5 M894.3,640 V679.5 M899.2,640 V679.5 M914.1,640 V679.5 M919.0,640 V679.5 M924.0,640 V679.5 M928.9,640 V679.5 M933.8,640 V679.5 M938.8,640 V679.5 M948.7,640 V679.5 M953.6,640 V679.5 M958.5,640 V679.5 M963.5,640 V679.5 M973.4,640 V679.5 M988.2,640 V679.5 M998.1,640 V679.5 M1008.0,640 V679.5 M1012.9,640 V679.5 M1017.9,640 V679.5 M1022.8,640 V679.5 M1027.7,640 V679.5 M1032.7,640 V679.5 M1042.6,640 V679.5 M1057.4,640 V679.5 M1062.3,640 V679.5 M1067.3,640 V679.5 M1072.2,640 V679.5 M1077.2,640 V679.5 M1082.1,640 V679.5 M1092.0,640 V679.5 M1096.9,640 V679.5 M1101.9,640 V679.5 M1106.8,640 V679.5 M1116.7,640 V679.5 M1121.6,640 V679.5 M1131.5,640 V679.5 M1136.5,640 V679.5 M1141.4,640 V679.5 M1146.3,640 V679.5 M1156.2,640 V679.5 M1161.2,640 V679.5 M1180.9,640 V679.5 M1185.9,640 V679.5 M1190.8,640 V679.5 M1195.8,640 V679.5 M1225.4,640 V679.5 M1230.4,640 V679.5 M1240.2,640 V679.5 M1245.2,640 V679.5 M1250.1,640 V679.5 M1255.1,640 V679.5 M1260.0,640 V679.5 M1265.0,640 V679.5 M1269.9,640 V679.5 M1279.8,640 V679.5" stroke="#84d884" stroke-width="1.8" fill="none"/><path d="M-0.2,660.7 V679.5 M24.5,660.7 V679.5 M29.5,660.7 V679.5 M39.3,660.7 V679.5 M44.3,660.7 V679.5 M73.9,660.7 V679.5 M103.6,660.7 V679.5 M123.4,660.7 V679.5 M182.7,660.7 V679.5 M187.6,660.7 V679.5 M192.5,660.7 V679.5 M271.6,660.7 V679.5 M301.3,660.7 V679.5 M316.1,660.7 V679.5 M321.0,660.7 V679.5 M335.9,660.7 V679.5 M350.7,660.7 V679.5 M355.6,660.7 V679.5 M370.5,640 V679.5 M380.3,640 V679.5 M419.9,640 V679.5 M429.8,640 V679.5 M434.7,640 V679.5 M449.5,640 V679.5 M454.5,640 V679.5 M533.5,640 V679.5 M558.2,640 V679.5 M573.1,640 V679.5 M587.9,640 V679.5 M622.5,640 V679.5 M627.4,640 V679.5 M642.3,640 V679.5 M696.6,640 V679.5 M716.4,640 V679.5 M726.3,640 V679.5 M731.2,640 V679.5 M746.0,640 V679.5 M775.7,640 V679.5 M800.4,672 V679.5 M805.3,640 V679.5 M815.2,640 V679.5 M830.1,640 V679.5 M835.0,640 V679.5 M859.7,640 V679.5 M864.7,640 V679.5 M874.5,640 V679.5 M904.2,640 V679.5 M909.1,640 V679.5 M943.7,640 V679.5 M968.4,640 V679.5 M978.3,640 V679.5 M983.3,640 V679.5 M993.1,640 V679.5 M1003.0,640 V679.5 M1037.6,640 V679.5 M1047.5,640 V679.5 M1052.4,640 V679.5 M1087.0,640 V679.5 M1111.8,640 V679.5 M1126.6,640 V679.5 M1151.3,640 V679.5 M1166.1,640 V679.5 M1171.1,640 V679.5 M1176.0,640 V679.5 M1200.7,640 V679.5 M1205.6,640 V679.5 M1210.6,640 V679.5 M1215.5,640 V679.5 M1220.5,640 V679.5 M1235.3,640 V679.5 M1274.8,640 V679.5" stroke="#28b828" stroke-width="1.5" fill="none"/><rect x="0" y="679.5" width="1280" height="1.2" fill="#3a3a3a" /><rect x="10.8" y="680" width="1" height="2" fill="#3a3a3a" /><text x="11.8" y="688.3" font-size="7.5" fill="#1b1b1b" text-anchor="end" stroke="#1b1b1b" stroke-width="0.2">5</text><rect x="33.16" y="680" width="1" height="2" fill="#3a3a3a" /><text x="34.16" y="688.3" font-size="7.5" fill="#1b1b1b" text-anchor="end" stroke="#1b1b1b" stroke-width="0.2">10</text><rect x="55.519999999999996" y="680" width="1" height="2" fill="#3a3a3a" /><text x="56.519999999999996" y="688.3" font-size="7.5" fill="#1b1b1b" text-anchor="end" stroke="#1b1b1b" stroke-width="0.2">14</text><rect x="77.88" y="680" width="1" height="2" fill="#3a3a3a" /><text x="78.88" y="688.3" font-size="7.5" fill="#1b1b1b" text-anchor="end" stroke="#1b1b1b" stroke-width="0.2">19</text><rect x="100.24" y="680" width="1" height="2" fill="#3a3a3a" /><text x="101.24" y="688.3" font-size="7.5" fill="#1b1b1b" text-anchor="end" stroke="#1b1b1b" stroke-width="0.2">23</text><rect x="122.6" y="680" width="1" height="2" fill="#3a3a3a" /><text x="123.6" y="688.3" font-size="7.5" fill="#1b1b1b" text-anchor="end" stroke="#1b1b1b" stroke-width="0.2">28</text><rect x="144.96" y="680" width="1" height="2" fill="#3a3a3a" /><text x="145.96" y="688.3" font-size="7.5" fill="#1b1b1b" text-anchor="end" stroke="#1b1b1b" stroke-width="0.2">32</text><rect x="167.32" y="680" width="1" height="2" fill="#3a3a3a" /><text x="168.32" y="688.3" font-size="7.5" fill="#1b1b1b" text-anchor="end" stroke="#1b1b1b" stroke-width="0.2">37</text><rect x="189.68" y="680" width="1" height="2" fill="#3a3a3a" /><text x="190.68" y="688.3" font-size="7.5" fill="#1b1b1b" text-anchor="end" stroke="#1b1b1b" stroke-width="0.2">41</text><rect x="212.04000000000002" y="680" width="1" height="2" fill="#3a3a3a" /><text x="213.04000000000002" y="688.3" font-size="7.5" fill="#1b1b1b" text-anchor="end" stroke="#1b1b1b" stroke-width="0.2">46</text><rect x="234.4" y="680" width="1" height="2" fill="#3a3a3a" /><text x="235.4" y="688.3" font-size="7.5" fill="#1b1b1b" text-anchor="end" stroke="#1b1b1b" stroke-width="0.2">50</text><rect x="256.76" y="680" width="1" height="2" fill="#3a3a3a" /><text x="257.76" y="688.3" font-size="7.5" fill="#1b1b1b" text-anchor="end" stroke="#1b1b1b" stroke-width="0.2">55</text><rect x="279.12" y="680" width="1" height="2" fill="#3a3a3a" /><text x="280.12" y="688.3" font-size="7.5" fill="#1b1b1b" text-anchor="end" stroke="#1b1b1b" stroke-width="0.2">59</text><rect x="301.48" y="680" width="1" height="2" fill="#3a3a3a" /><text x="302.48" y="688.3" font-size="7.5" fill="#1b1b1b" text-anchor="end" stroke="#1b1b1b" stroke-width="0.2">64</text><rect x="323.84" y="680" width="1" height="2" fill="#3a3a3a" /><text x="324.84" y="688.3" font-size="7.5" fill="#1b1b1b" text-anchor="end" stroke="#1b1b1b" stroke-width="0.2">68</text><rect x="346.2" y="680" width="1" height="2" fill="#3a3a3a" /><text x="347.2" y="688.3" font-size="7.5" fill="#1b1b1b" text-anchor="end" stroke="#1b1b1b" stroke-width="0.2">73</text><rect x="368.56" y="680" width="1" height="2" fill="#3a3a3a" /><text x="369.56" y="688.3" font-size="7.5" fill="#1b1b1b" text-anchor="end" stroke="#1b1b1b" stroke-width="0.2">77</text><rect x="390.92" y="680" width="1" height="2" fill="#3a3a3a" /><text x="391.92" y="688.3" font-size="7.5" fill="#1b1b1b" text-anchor="end" stroke="#1b1b1b" stroke-width="0.2">82</text><rect x="413.28000000000003" y="680" width="1" height="2" fill="#3a3a3a" /><text x="414.28000000000003" y="688.3" font-size="7.5" fill="#1b1b1b" text-anchor="end" stroke="#1b1b1b" stroke-width="0.2">86</text><rect x="435.64" y="680" width="1" height="2" fill="#3a3a3a" /><text x="436.64" y="688.3" font-size="7.5" fill="#1b1b1b" text-anchor="end" stroke="#1b1b1b" stroke-width="0.2">91</text><rect x="458.0" y="680" width="1" height="2" fill="#3a3a3a" /><text x="459.0" y="688.3" font-size="7.5" fill="#1b1b1b" text-anchor="end" stroke="#1b1b1b" stroke-width="0.2">95</text><rect x="480.36" y="680" width="1" height="2" fill="#3a3a3a" /><text x="481.36" y="688.3" font-size="7.5" fill="#1b1b1b" text-anchor="end" stroke="#1b1b1b" stroke-width="0.2">100</text><rect x="502.71999999999997" y="680" width="1" height="2" fill="#3a3a3a" /><text x="503.71999999999997" y="688.3" font-size="7.5" fill="#1b1b1b" text-anchor="end" stroke="#1b1b1b" stroke-width="0.2">104</text><rect x="525.0799999999999" y="680" width="1" height="2" fill="#3a3a3a" /><text x="526.0799999999999" y="688.3" font-size="7.5" fill="#1b1b1b" text-anchor="end" stroke="#1b1b1b" stroke-width="0.2">109</text><rect x="547.4399999999999" y="680" width="1" height="2" fill="#3a3a3a" /><text x="548.4399999999999" y="688.3" font-size="7.5" fill="#1b1b1b" text-anchor="end" stroke="#1b1b1b" stroke-width="0.2">113</text><rect x="569.8" y="680" width="1" height="2" fill="#3a3a3a" /><text x="570.8" y="688.3" font-size="7.5" fill="#1b1b1b" text-anchor="end" stroke="#1b1b1b" stroke-width="0.2">118</text><rect x="592.16" y="680" width="1" height="2" fill="#3a3a3a" /><text x="593.16" y="688.3" font-size="7.5" fill="#1b1b1b" text-anchor="end" stroke="#1b1b1b" stroke-width="0.2">122</text><rect x="614.52" y="680" width="1" height="2" fill="#3a3a3a" /><text x="615.52" y="688.3" font-size="7.5" fill="#1b1b1b" text-anchor="end" stroke="#1b1b1b" stroke-width="0.2">127</text><rect x="636.8799999999999" y="680" width="1" height="2" fill="#3a3a3a" /><text x="637.8799999999999" y="688.3" font-size="7.5" fill="#1b1b1b" text-anchor="end" stroke="#1b1b1b" stroke-width="0.2">131</text><rect x="659.2399999999999" y="680" width="1" height="2" fill="#3a3a3a" /><text x="660.2399999999999" y="688.3" font-size="7.5" fill="#1b1b1b" text-anchor="end" stroke="#1b1b1b" stroke-width="0.2">136</text><rect x="681.5999999999999" y="680" width="1" height="2" fill="#3a3a3a" /><text x="682.5999999999999" y="688.3" font-size="7.5" fill="#1b1b1b" text-anchor="end" stroke="#1b1b1b" stroke-width="0.2">140</text><rect x="703.9599999999999" y="680" width="1" height="2" fill="#3a3a3a" /><text x="704.9599999999999" y="688.3" font-size="7.5" fill="#1b1b1b" text-anchor="end" stroke="#1b1b1b" stroke-width="0.2">145</text><rect x="726.3199999999999" y="680" width="1" height="2" fill="#3a3a3a" /><text x="727.3199999999999" y="688.3" font-size="7.5" fill="#1b1b1b" text-anchor="end" stroke="#1b1b1b" stroke-width="0.2">149</text><rect x="748.68" y="680" width="1" height="2" fill="#3a3a3a" /><text x="749.68" y="688.3" font-size="7.5" fill="#1b1b1b" text-anchor="end" stroke="#1b1b1b" stroke-width="0.2">154</text><rect x="771.04" y="680" width="1" height="2" fill="#3a3a3a" /><text x="772.04" y="688.3" font-size="7.5" fill="#1b1b1b" text-anchor="end" stroke="#1b1b1b" stroke-width="0.2">158</text><rect x="793.4" y="680" width="1" height="2" fill="#3a3a3a" /><text x="794.4" y="688.3" font-size="7.5" fill="#1b1b1b" text-anchor="end" stroke="#1b1b1b" stroke-width="0.2">163</text><rect x="815.76" y="680" width="1" height="2" fill="#3a3a3a" /><text x="816.76" y="688.3" font-size="7.5" fill="#1b1b1b" text-anchor="end" stroke="#1b1b1b" stroke-width="0.2">168</text><rect x="838.1199999999999" y="680" width="1" height="2" fill="#3a3a3a" /><text x="839.1199999999999" y="688.3" font-size="7.5" fill="#1b1b1b" text-anchor="end" stroke="#1b1b1b" stroke-width="0.2">172</text><rect x="860.4799999999999" y="680" width="1" height="2" fill="#3a3a3a" /><text x="861.4799999999999" y="688.3" font-size="7.5" fill="#1b1b1b" text-anchor="end" stroke="#1b1b1b" stroke-width="0.2">177</text><rect x="882.8399999999999" y="680" width="1" height="2" fill="#3a3a3a" /><text x="883.8399999999999" y="688.3" font-size="7.5" fill="#1b1b1b" text-anchor="end" stroke="#1b1b1b" stroke-width="0.2">181</text><rect x="905.1999999999999" y="680" width="1" height="2" fill="#3a3a3a" /><text x="906.1999999999999" y="688.3" font-size="7.5" fill="#1b1b1b" text-anchor="end" stroke="#1b1b1b" stroke-width="0.2">186</text><rect x="927.56" y="680" width="1" height="2" fill="#3a3a3a" /><text x="928.56" y="688.3" font-size="7.5" fill="#1b1b1b" text-anchor="end" stroke="#1b1b1b" stroke-width="0.2">190</text><rect x="949.92" y="680" width="1" height="2" fill="#3a3a3a" /><text x="950.92" y="688.3" font-size="7.5" fill="#1b1b1b" text-anchor="end" stroke="#1b1b1b" stroke-width="0.2">195</text><rect x="972.28" y="680" width="1" height="2" fill="#3a3a3a" /><text x="973.28" y="688.3" font-size="7.5" fill="#1b1b1b" text-anchor="end" stroke="#1b1b1b" stroke-width="0.2">199</text><rect x="994.6399999999999" y="680" width="1" height="2" fill="#3a3a3a" /><text x="995.6399999999999" y="688.3" font-size="7.5" fill="#1b1b1b" text-anchor="end" stroke="#1b1b1b" stroke-width="0.2">204</text><rect x="1016.9999999999999" y="680" width="1" height="2" fill="#3a3a3a" /><text x="1017.9999999999999" y="688.3" font-size="7.5" fill="#1b1b1b" text-anchor="end" stroke="#1b1b1b" stroke-width="0.2">208</text><rect x="1039.36" y="680" width="1" height="2" fill="#3a3a3a" /><text x="1040.36" y="688.3" font-size="7.5" fill="#1b1b1b" text-anchor="end" stroke="#1b1b1b" stroke-width="0.2">213</text><rect x="1061.72" y="680" width="1" height="2" fill="#3a3a3a" /><text x="1062.72" y="688.3" font-size="7.5" fill="#1b1b1b" text-anchor="end" stroke="#1b1b1b" stroke-width="0.2">217</text><rect x="1084.08" y="680" width="1" height="2" fill="#3a3a3a" /><text x="1085.08" y="688.3" font-size="7.5" fill="#1b1b1b" text-anchor="end" stroke="#1b1b1b" stroke-width="0.2">222</text><rect x="1106.4399999999998" y="680" width="1" height="2" fill="#3a3a3a" /><text x="1107.4399999999998" y="688.3" font-size="7.5" fill="#1b1b1b" text-anchor="end" stroke="#1b1b1b" stroke-width="0.2">226</text><rect x="1128.8" y="680" width="1" height="2" fill="#3a3a3a" /><text x="1129.8" y="688.3" font-size="7.5" fill="#1b1b1b" text-anchor="end" stroke="#1b1b1b" stroke-width="0.2">231</text><rect x="1151.1599999999999" y="680" width="1" height="2" fill="#3a3a3a" /><text x="1152.1599999999999" y="688.3" font-size="7.5" fill="#1b1b1b" text-anchor="end" stroke="#1b1b1b" stroke-width="0.2">235</text><rect x="1173.52" y="680" width="1" height="2" fill="#3a3a3a" /><text x="1174.52" y="688.3" font-size="7.5" fill="#1b1b1b" text-anchor="end" stroke="#1b1b1b" stroke-width="0.2">240</text><rect x="1195.8799999999999" y="680" width="1" height="2" fill="#3a3a3a" /><text x="1196.8799999999999" y="688.3" font-size="7.5" fill="#1b1b1b" text-anchor="end" stroke="#1b1b1b" stroke-width="0.2">244</text><rect x="1218.24" y="680" width="1" height="2" fill="#3a3a3a" /><text x="1219.24" y="688.3" font-size="7.5" fill="#1b1b1b" text-anchor="end" stroke="#1b1b1b" stroke-width="0.2">249</text><rect x="1240.6" y="680" width="1" height="2" fill="#3a3a3a" /><text x="1241.6" y="688.3" font-size="7.5" fill="#1b1b1b" text-anchor="end" stroke="#1b1b1b" stroke-width="0.2">253</text><rect x="1262.9599999999998" y="680" width="1" height="2" fill="#3a3a3a" /><text x="1263.9599999999998" y="688.3" font-size="7.5" fill="#1b1b1b" text-anchor="end" stroke="#1b1b1b" stroke-width="0.2">258</text><rect x="0" y="692" width="1280" height="28" fill="#f0f0f0" /><path d="M0,692.5 H71.5 V705.5 H107 V692.5 H1280" fill="none" stroke="#2a2a2a" stroke-width="1.2"/><rect x="72" y="693" width="35" height="12" fill="#ffffff" /><text x="-2" y="702.5" font-size="9.5" fill="#8a8a8a" textLength="26" lengthAdjust="spacingAndGlyphs" >ettings</text><rect x="31" y="695" width="1" height="9" fill="#8a8a8a" /><text x="37.5" y="702.5" font-size="9.5" fill="#8a8a8a" textLength="26" lengthAdjust="spacingAndGlyphs" >Results</text><text x="78" y="702.5" font-size="9.5" fill="#1b1b1b" textLength="22" lengthAdjust="spacingAndGlyphs" >Graph</text><text x="113.5" y="702.5" font-size="9.5" fill="#8a8a8a" textLength="25" lengthAdjust="spacingAndGlyphs" >Report</text><rect x="145.5" y="695" width="1" height="9" fill="#8a8a8a" /><text x="151.5" y="702.5" font-size="9.5" fill="#8a8a8a" textLength="28" lengthAdjust="spacingAndGlyphs" >Journal</text><rect x="186" y="695" width="1" height="9" fill="#8a8a8a" /><rect x="0" y="708.5" width="1280" height="1" fill="#d8d8d8" /><rect x="0" y="709.5" width="1280" height="1" fill="#ffffff" /><text x="0" y="721.5" font-size="9.5" fill="#1b1b1b" textLength="41" lengthAdjust="spacingAndGlyphs" >lp, press F1</text><rect x="818" y="711" width="1" height="9" fill="#b4b4b4" /><rect x="899.5" y="711" width="1" height="9" fill="#b4b4b4" /><rect x="970" y="711" width="1" height="9" fill="#b4b4b4" /><rect x="1020" y="711" width="1" height="9" fill="#b4b4b4" /><rect x="1069.5" y="711" width="1" height="9" fill="#b4b4b4" /><rect x="1117" y="711" width="1" height="9" fill="#b4b4b4" /><rect x="1165" y="711" width="1" height="9" fill="#b4b4b4" /><rect x="1212" y="711" width="1" height="9" fill="#b4b4b4" /><text x="822" y="721.5" font-size="9.5" fill="#1b1b1b" textLength="27" lengthAdjust="spacingAndGlyphs" >Default</text><text x="903.5" y="721.5" font-size="9.5" fill="#1b1b1b" textLength="58.5" lengthAdjust="spacingAndGlyphs" >2025.10.15 00:00</text><text x="974" y="721.5" font-size="9.5" fill="#1b1b1b" textLength="40.5" lengthAdjust="spacingAndGlyphs" >O: 4161.305</text><text x="1024" y="721.5" font-size="9.5" fill="#1b1b1b" textLength="41" lengthAdjust="spacingAndGlyphs" >H: 4169.415</text><text x="1074" y="721.5" font-size="9.5" fill="#1b1b1b" textLength="39.5" lengthAdjust="spacingAndGlyphs" >L: 4153.465</text><text x="1121.5" y="721.5" font-size="9.5" fill="#1b1b1b" textLength="40.5" lengthAdjust="spacingAndGlyphs" >C: 4162.215</text><text x="1169.5" y="721.5" font-size="9.5" fill="#1b1b1b" textLength="31" lengthAdjust="spacingAndGlyphs" >V: 13083</text><g><rect x="1216.5" y="713.5" width="16" height="7" fill="#6f9a3a"/><rect x="1219" y="715" width="1.2" height="5" fill="#fff"/><rect x="1222" y="715" width="1.2" height="5" fill="#fff"/><rect x="1225" y="715" width="1.2" height="5" fill="#fff"/><rect x="1228" y="715" width="1.2" height="5" fill="#fff"/><rect x="1226" y="716" width="6" height="4" fill="#2a4a8a"/></g><text x="1235" y="721.5" font-size="9.5" fill="#1b1b1b" textLength="35" lengthAdjust="spacingAndGlyphs" >2306/2 kb</text></svg></body></html>
